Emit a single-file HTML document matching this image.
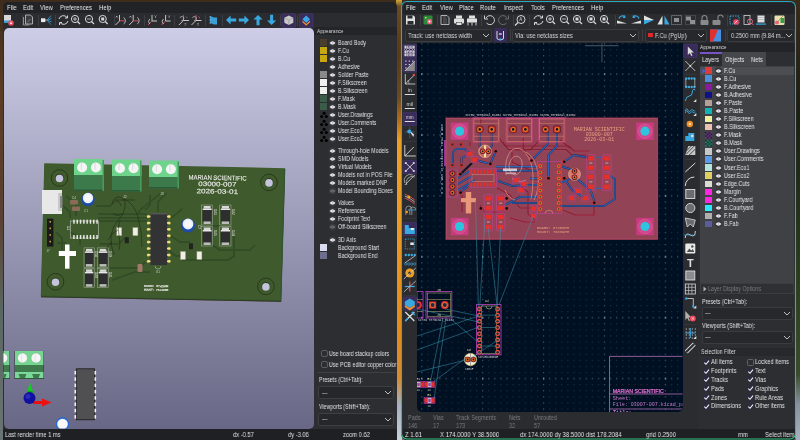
<!DOCTYPE html><html><head><meta charset="utf-8"><style>
*{margin:0;padding:0;box-sizing:border-box}
html,body{width:800px;height:440px;overflow:hidden}
body{position:relative;font-family:"Liberation Sans", sans-serif;background:#5a3a1a}
.ab{position:absolute}
.t{position:absolute;white-space:nowrap;will-change:transform;font-size:6px;line-height:8px;color:#dcdcdc;transform:scaleX(0.79);transform-origin:0 50%}
svg{position:absolute;overflow:visible}
</style></head><body>

<div class="ab" style="left:0px;top:0px;width:800px;height:440px;background:linear-gradient(180deg,#3e2c1c 0%,#5a3c24 20%,#5a4030 50%,#5a6660 70%,#6a7474 100%);"></div>
<div class="ab" style="left:396px;top:0px;width:6px;height:440px;background:linear-gradient(180deg,#d0a838 0%,#6a4a20 1.5%,#5a3a18 12%,#6a4a22 22%,#b06a18 27%,#f0a020 32%,#f09a20 50%,#e88a18 75%,#d88a30 86%,#a8b0c0 92%,#c8d0d8 100%);"></div>
<div class="ab" style="left:2.5px;top:1.5px;width:394px;height:438.5px;background:#2c2e32;border-radius:5px 5px 0 0"></div>
<div class="ab" style="left:2.5px;top:1.5px;width:394px;height:11.5px;background:#222327;border-radius:5px 5px 0 0"></div>
<div class="t" style="left:7px;top:4px;font-size:7.51px;color:#e6e6e6;">File</div>
<div class="t" style="left:23px;top:4px;font-size:7.51px;color:#e6e6e6;">Edit</div>
<div class="t" style="left:40px;top:4px;font-size:7.51px;color:#e6e6e6;">View</div>
<div class="t" style="left:60px;top:4px;font-size:7.51px;color:#e6e6e6;">Preferences</div>
<div class="t" style="left:99px;top:4px;font-size:7.51px;color:#e6e6e6;">Help</div>
<div class="ab" style="left:2.5px;top:13px;width:394px;height:15px;background:#2a2c30;"></div>
<div class="ab" style="left:2.5px;top:428.5px;width:394px;height:11.5px;background:#1f2023;"></div>
<div class="t" style="left:5px;top:430.5px;font-size:7.29px;color:#e0e0e0;">Last render time 1 ms</div>
<div class="t" style="left:233px;top:430.5px;font-size:7.29px;color:#e0e0e0;">dx -0.57</div>
<div class="t" style="left:288px;top:430.5px;font-size:7.29px;color:#e0e0e0;">dy -3.06</div>
<div class="t" style="left:343px;top:430.5px;font-size:7.29px;color:#e0e0e0;">zoom 0.62</div>
<div class="ab" style="left:3.5px;top:28px;width:310px;height:400.5px;background:linear-gradient(180deg,#cdcde7 0%,#686886 100%);border-radius:5px"></div>
<svg width="800" height="440" style="left:0;top:0">
<rect x="4" y="15" width="7" height="8" fill="#d8d8d8"/><rect x="4" y="20.5" width="7" height="2.5" fill="#3aa0d8"/><circle cx="11" cy="23" r="2.8" fill="#e84a5a"/><path d="M11 21.5v2.5M9.8 22.8l1.2 1.2 1.2-1.2" stroke="#fff" stroke-width="0.7" fill="none"/><path d="M23.5 17v8h6" fill="none" stroke="#a8a8a8" stroke-width="0.8"/><path d="M25.5 15h5l2 2v7h-7z" fill="#3a3c40" stroke="#c8c8c8" stroke-width="0.8"/><path d="M27 22.5l3.5-3.5" stroke="#909090" stroke-width="0.8"/><rect x="41" y="18.3" width="4.2" height="3.8" fill="#e8e8e8"/><rect x="45.2" y="19.2" width="1.2" height="2" fill="#b0b0b0"/><path d="M47 20.2l4-4.5M47 20.2l4 4.5M47 20.2l4.5-1.6M47 20.2l4.5 1.6" stroke="#3aa0d8" stroke-width="0.8"/><path d="M59 19a4.5 4.5 0 0 1 8-1.5M68 21a4.5 4.5 0 0 1-8 1.5" stroke="#d8d8d8" stroke-width="1" fill="none"/><path d="M67.5 15.5v2.5h-2.5M59.5 25v-2.5h2.5" stroke="#d8d8d8" stroke-width="1" fill="none"/><circle cx="75" cy="19" r="3.6" stroke="#d8d8d8" stroke-width="1" fill="none"/><path d="M77.5 21.5l2.5 2.5" stroke="#d8d8d8" stroke-width="1.2"/><path d="M73 19h4M75 17v4" stroke="#d8d8d8" stroke-width="0.8"/><circle cx="89" cy="19" r="3.6" stroke="#d8d8d8" stroke-width="1" fill="none"/><path d="M91.5 21.5l2.5 2.5" stroke="#d8d8d8" stroke-width="1.2"/><path d="M87 19h4" stroke="#d8d8d8" stroke-width="0.8"/><circle cx="102.7" cy="19" r="3.6" stroke="#d8d8d8" stroke-width="1" fill="none"/><path d="M105.2 21.5l2.5 2.5" stroke="#d8d8d8" stroke-width="1.2"/><rect x="101.2" y="17.5" width="3" height="3" fill="#d8d8d8"/><path d="M119.5 15v6M115.5 25l4-4" stroke="#d8d8d8" stroke-width="0.9" fill="none"/><path d="M116 16l1.5 1.5M117.5 16l-1.5 1.5" stroke="#d8d8d8" stroke-width="0.6"/><path d="M119.5 20.8h5" stroke="#e84a5a" stroke-width="0.9"/><path d="M123.5 17.5a3 3.5 0 0 1 0 6.5" stroke="#d8d8d8" stroke-width="0.8" fill="none"/><path d="M133.2 15v6M129.2 25l4-4" stroke="#d8d8d8" stroke-width="0.9" fill="none"/><path d="M129.7 16l1.5 1.5M131.2 16l-1.5 1.5" stroke="#d8d8d8" stroke-width="0.6"/><path d="M133.2 20.8h5" stroke="#e84a5a" stroke-width="0.9"/><path d="M137.2 17.5a3 3.5 0 0 1 0 6.5" stroke="#d8d8d8" stroke-width="0.8" fill="none"/><path d="M152 15v6h5" stroke="#d8d8d8" stroke-width="0.9" fill="none"/><path d="M148 25l4-4" stroke="#e84a5a" stroke-width="0.9"/><path d="M154.5 15.5l1 1 1-1M155.5 16.5v1.5" stroke="#d8d8d8" stroke-width="0.5" fill="none"/><path d="M150 19a3 3 0 0 0 0 5" stroke="#d8d8d8" stroke-width="0.8" fill="none"/><path d="M165.6 15v6h5" stroke="#d8d8d8" stroke-width="0.9" fill="none"/><path d="M161.6 25l4-4" stroke="#e84a5a" stroke-width="0.9"/><path d="M168.1 15.5l1 1 1-1M169.1 16.5v1.5" stroke="#d8d8d8" stroke-width="0.5" fill="none"/><path d="M163.6 19a3 3 0 0 0 0 5" stroke="#d8d8d8" stroke-width="0.8" fill="none"/><path d="M183.4 15v5.5" stroke="#e84a5a" stroke-width="0.9"/><path d="M183.4 20.5h5.5M178.9 25l4.5-4.5" stroke="#d8d8d8" stroke-width="0.9" fill="none"/><path d="M179.9 18a2 2 0 1 1 1.5 2.5" stroke="#d8d8d8" stroke-width="0.6" fill="none"/><path d="M184.4 23.5h2M184.4 25h2" stroke="#b8b8b8" stroke-width="0.5"/><path d="M185.9 16.5l1.5 1.5" stroke="#b8b8b8" stroke-width="0.5"/><path d="M196 15v5.5" stroke="#e84a5a" stroke-width="0.9"/><path d="M196 20.5h5.5M191.5 25l4.5-4.5" stroke="#d8d8d8" stroke-width="0.9" fill="none"/><path d="M192.5 18a2 2 0 1 1 1.5 2.5" stroke="#d8d8d8" stroke-width="0.6" fill="none"/><path d="M197 23.5h2M197 25h2" stroke="#b8b8b8" stroke-width="0.5"/><path d="M198.5 16.5l1.5 1.5" stroke="#b8b8b8" stroke-width="0.5"/><path d="M210 16l4 1.5v7l-4-1.5z" fill="#3aa0d8"/><path d="M214 17.5h3v7h-3" fill="#3aa0d8"/><path d="M209 17h2M209 20h2M209 23h2" stroke="#ccc" stroke-width="0.5"/><path d="M226 20l4.6-4.6v3.1h5.6v3h-5.6v3.1z" fill="#3aa8e0"/><path d="M249 20l-4.6-4.6v3.1h-5.6v3h5.6v3.1z" fill="#3aa8e0"/><path d="M258 15l-4.6 4.6h3.1v5.6h3v-5.6h3.1z" fill="#3aa8e0"/><path d="M271.6 25l-4.6-4.6h3.1v-5.6h3v5.6h3.1z" fill="#3aa8e0"/><rect x="282" y="13.8" width="13.5" height="13.5" fill="#3a2c5a" stroke="#4c3c78" stroke-width="0.6" rx="1"/><path d="M288.8 15.5l4.5 2.3v5l-4.5 2.3-4.5-2.3v-5z" fill="#c8c8c8"/><path d="M284.3 17.8l4.5 2.3 4.5-2.3M288.8 20.1v5" stroke="#888" stroke-width="0.5" fill="none"/><rect x="299.5" y="13.8" width="13.5" height="13.5" fill="#3a2c5a" stroke="#4c3c78" stroke-width="0.6" rx="1"/><path d="M306.2 15.5l3.8 3.8-3.8 3.8-3.8-3.8z" fill="#3aa8e8"/><path d="M302.4 20.5l3.8 3.6 3.8-3.6v1.8l-3.8 3.4-3.8-3.4z" fill="#f0902a"/>
</svg>
<div class="ab" style="left:22px;top:15px;width:0.8px;height:11px;background:#3c3e43;"></div>
<div class="ab" style="left:37.5px;top:15px;width:0.8px;height:11px;background:#3c3e43;"></div>
<div class="ab" style="left:55.3px;top:15px;width:0.8px;height:11px;background:#3c3e43;"></div>
<div class="ab" style="left:113.5px;top:15px;width:0.8px;height:11px;background:#3c3e43;"></div>
<div class="ab" style="left:144px;top:15px;width:0.8px;height:11px;background:#3c3e43;"></div>
<div class="ab" style="left:174.4px;top:15px;width:0.8px;height:11px;background:#3c3e43;"></div>
<div class="ab" style="left:205px;top:15px;width:0.8px;height:11px;background:#3c3e43;"></div>
<div class="ab" style="left:222px;top:15px;width:0.8px;height:11px;background:#3c3e43;"></div>
<div class="ab" style="left:280.4px;top:15px;width:0.8px;height:11px;background:#3c3e43;"></div>
<div class="ab" style="left:297px;top:15px;width:0.8px;height:11px;background:#3c3e43;"></div>
<div class="ab" style="left:313.5px;top:27px;width:83px;height:7.5px;background:#232528;"></div>
<div class="t" style="left:317px;top:26.8px;font-size:6.21px;color:#d8d8d8;">Appearance</div>
<div class="ab" style="left:320px;top:39.300000000000004px;width:7px;height:6.6px;background:#4a3e2c;"></div>
<svg width="9" height="8" style="left:328.9px;top:38.6px"><circle cx="3.5" cy="4" r="3.8" fill="#36383c"/><path d="M0.6 4q2.9-3.4 5.8 0q-2.9 3.4-5.8 0z" fill="#ece8ee"/><circle cx="3.5" cy="4" r="0.7" fill="#a8a4b0"/></svg>
<div class="t" style="left:337.8px;top:38.6px;font-size:6.75px;color:#e0e0e0;">Board Body</div>
<div class="ab" style="left:320px;top:47.300000000000004px;width:7px;height:6.6px;background:#c8a810;"></div>
<svg width="9" height="8" style="left:328.9px;top:46.6px"><circle cx="3.5" cy="4" r="3.8" fill="#36383c"/><path d="M0.6 4q2.9-3.4 5.8 0q-2.9 3.4-5.8 0z" fill="#ece8ee"/><circle cx="3.5" cy="4" r="0.7" fill="#a8a4b0"/></svg>
<div class="t" style="left:337.8px;top:46.6px;font-size:6.75px;color:#e0e0e0;">F.Cu</div>
<div class="ab" style="left:320px;top:55.300000000000004px;width:7px;height:6.6px;background:#c8a810;"></div>
<svg width="9" height="8" style="left:328.9px;top:54.6px"><circle cx="3.5" cy="4" r="3.8" fill="#36383c"/><path d="M0.6 4q2.9-3.4 5.8 0q-2.9 3.4-5.8 0z" fill="#ece8ee"/><circle cx="3.5" cy="4" r="0.7" fill="#a8a4b0"/></svg>
<div class="t" style="left:337.8px;top:54.6px;font-size:6.75px;color:#e0e0e0;">B.Cu</div>
<svg width="9" height="8" style="left:328.9px;top:62.599999999999994px"><circle cx="3.5" cy="4" r="3.8" fill="#36383c"/><path d="M0.6 4q2.9-3.4 5.8 0q-2.9 3.4-5.8 0z" fill="#ece8ee"/><circle cx="3.5" cy="4" r="0.7" fill="#a8a4b0"/></svg>
<div class="t" style="left:337.8px;top:62.599999999999994px;font-size:6.75px;color:#e0e0e0;">Adhesive</div>
<div class="ab" style="left:320px;top:71.3px;width:7px;height:6.6px;background:#8a8a8a;"></div>
<svg width="9" height="8" style="left:328.9px;top:70.6px"><circle cx="3.5" cy="4" r="3.8" fill="#36383c"/><path d="M0.6 4q2.9-3.4 5.8 0q-2.9 3.4-5.8 0z" fill="#ece8ee"/><circle cx="3.5" cy="4" r="0.7" fill="#a8a4b0"/></svg>
<div class="t" style="left:337.8px;top:70.6px;font-size:6.75px;color:#e0e0e0;">Solder Paste</div>
<div class="ab" style="left:320px;top:79.3px;width:7px;height:6.6px;background:#f0f0f0;"></div>
<svg width="9" height="8" style="left:328.9px;top:78.6px"><circle cx="3.5" cy="4" r="3.8" fill="#36383c"/><path d="M0.6 4q2.9-3.4 5.8 0q-2.9 3.4-5.8 0z" fill="#ece8ee"/><circle cx="3.5" cy="4" r="0.7" fill="#a8a4b0"/></svg>
<div class="t" style="left:337.8px;top:78.6px;font-size:6.75px;color:#e0e0e0;">F.Silkscreen</div>
<div class="ab" style="left:320px;top:87.3px;width:7px;height:6.6px;background:#f0f0f0;"></div>
<svg width="9" height="8" style="left:328.9px;top:86.6px"><circle cx="3.5" cy="4" r="3.8" fill="#36383c"/><path d="M0.6 4q2.9-3.4 5.8 0q-2.9 3.4-5.8 0z" fill="#ece8ee"/><circle cx="3.5" cy="4" r="0.7" fill="#a8a4b0"/></svg>
<div class="t" style="left:337.8px;top:86.6px;font-size:6.75px;color:#e0e0e0;">B.Silkscreen</div>
<div class="ab" style="left:320px;top:95.3px;width:7px;height:6.6px;background:#3a5c48;"></div>
<svg width="9" height="8" style="left:328.9px;top:94.6px"><circle cx="3.5" cy="4" r="3.8" fill="#36383c"/><path d="M0.6 4q2.9-3.4 5.8 0q-2.9 3.4-5.8 0z" fill="#ece8ee"/><circle cx="3.5" cy="4" r="0.7" fill="#a8a4b0"/></svg>
<div class="t" style="left:337.8px;top:94.6px;font-size:6.75px;color:#e0e0e0;">F.Mask</div>
<div class="ab" style="left:320px;top:103.3px;width:7px;height:6.6px;background:#3a5c48;"></div>
<svg width="9" height="8" style="left:328.9px;top:102.6px"><circle cx="3.5" cy="4" r="3.8" fill="#36383c"/><path d="M0.6 4q2.9-3.4 5.8 0q-2.9 3.4-5.8 0z" fill="#ece8ee"/><circle cx="3.5" cy="4" r="0.7" fill="#a8a4b0"/></svg>
<div class="t" style="left:337.8px;top:102.6px;font-size:6.75px;color:#e0e0e0;">B.Mask</div>
<svg width="8" height="8" style="left:320px;top:110.6px"><circle cx="4.1" cy="2.3" r="1.5" fill="#000"/><circle cx="1.6" cy="5.6" r="1.5" fill="#000"/><circle cx="6.3" cy="5.6" r="1.5" fill="#000"/></svg>
<svg width="9" height="8" style="left:328.9px;top:110.6px"><circle cx="3.5" cy="4" r="3.8" fill="#36383c"/><path d="M0.6 4q2.9-3.4 5.8 0q-2.9 3.4-5.8 0z" fill="#ece8ee"/><circle cx="3.5" cy="4" r="0.7" fill="#a8a4b0"/></svg>
<div class="t" style="left:337.8px;top:110.6px;font-size:6.75px;color:#e0e0e0;">User.Drawings</div>
<svg width="8" height="8" style="left:320px;top:118.6px"><circle cx="4.1" cy="2.3" r="1.5" fill="#000"/><circle cx="1.6" cy="5.6" r="1.5" fill="#000"/><circle cx="6.3" cy="5.6" r="1.5" fill="#000"/></svg>
<svg width="9" height="8" style="left:328.9px;top:118.6px"><circle cx="3.5" cy="4" r="3.8" fill="#36383c"/><path d="M0.6 4q2.9-3.4 5.8 0q-2.9 3.4-5.8 0z" fill="#ece8ee"/><circle cx="3.5" cy="4" r="0.7" fill="#a8a4b0"/></svg>
<div class="t" style="left:337.8px;top:118.6px;font-size:6.75px;color:#e0e0e0;">User.Comments</div>
<svg width="8" height="8" style="left:320px;top:126.6px"><circle cx="4.1" cy="2.3" r="1.5" fill="#000"/><circle cx="1.6" cy="5.6" r="1.5" fill="#000"/><circle cx="6.3" cy="5.6" r="1.5" fill="#000"/></svg>
<svg width="9" height="8" style="left:328.9px;top:126.6px"><circle cx="3.5" cy="4" r="3.8" fill="#36383c"/><path d="M0.6 4q2.9-3.4 5.8 0q-2.9 3.4-5.8 0z" fill="#ece8ee"/><circle cx="3.5" cy="4" r="0.7" fill="#a8a4b0"/></svg>
<div class="t" style="left:337.8px;top:126.6px;font-size:6.75px;color:#e0e0e0;">User.Eco1</div>
<svg width="8" height="8" style="left:320px;top:134.6px"><circle cx="4.1" cy="2.3" r="1.5" fill="#000"/><circle cx="1.6" cy="5.6" r="1.5" fill="#000"/><circle cx="6.3" cy="5.6" r="1.5" fill="#000"/></svg>
<svg width="9" height="8" style="left:328.9px;top:134.6px"><circle cx="3.5" cy="4" r="3.8" fill="#36383c"/><path d="M0.6 4q2.9-3.4 5.8 0q-2.9 3.4-5.8 0z" fill="#ece8ee"/><circle cx="3.5" cy="4" r="0.7" fill="#a8a4b0"/></svg>
<div class="t" style="left:337.8px;top:134.6px;font-size:6.75px;color:#e0e0e0;">User.Eco2</div>
<svg width="9" height="8" style="left:328.9px;top:146.8px"><circle cx="3.5" cy="4" r="3.8" fill="#36383c"/><path d="M0.6 4q2.9-3.4 5.8 0q-2.9 3.4-5.8 0z" fill="#ece8ee"/><circle cx="3.5" cy="4" r="0.7" fill="#a8a4b0"/></svg>
<div class="t" style="left:337.8px;top:146.8px;font-size:6.75px;color:#e0e0e0;">Through-hole Models</div>
<svg width="9" height="8" style="left:328.9px;top:154.8px"><circle cx="3.5" cy="4" r="3.8" fill="#36383c"/><path d="M0.6 4q2.9-3.4 5.8 0q-2.9 3.4-5.8 0z" fill="#ece8ee"/><circle cx="3.5" cy="4" r="0.7" fill="#a8a4b0"/></svg>
<div class="t" style="left:337.8px;top:154.8px;font-size:6.75px;color:#e0e0e0;">SMD Models</div>
<svg width="9" height="8" style="left:328.9px;top:162.8px"><circle cx="3.5" cy="4" r="3.8" fill="#36383c"/><path d="M0.6 4q2.9-3.4 5.8 0q-2.9 3.4-5.8 0z" fill="#ece8ee"/><circle cx="3.5" cy="4" r="0.7" fill="#a8a4b0"/></svg>
<div class="t" style="left:337.8px;top:162.8px;font-size:6.75px;color:#e0e0e0;">Virtual Models</div>
<svg width="9" height="8" style="left:328.9px;top:170.8px"><circle cx="3.5" cy="4" r="3.8" fill="#36383c"/><path d="M0.6 4q2.9-3.4 5.8 0q-2.9 3.4-5.8 0z" fill="#ece8ee"/><circle cx="3.5" cy="4" r="0.7" fill="#a8a4b0"/></svg>
<div class="t" style="left:337.8px;top:170.8px;font-size:6.75px;color:#e0e0e0;">Models not in POS File</div>
<svg width="9" height="8" style="left:328.9px;top:178.8px"><circle cx="3.5" cy="4" r="3.8" fill="#36383c"/><path d="M0.6 4q2.9-3.4 5.8 0q-2.9 3.4-5.8 0z" fill="#ece8ee"/><circle cx="3.5" cy="4" r="0.7" fill="#a8a4b0"/></svg>
<div class="t" style="left:337.8px;top:178.8px;font-size:6.75px;color:#e0e0e0;">Models marked DNP</div>
<svg width="9" height="8" style="left:328.9px;top:187px"><circle cx="3.5" cy="4" r="3.8" fill="#36383c"/><path d="M0.6 4q2.9-3.4 5.8 0q-2.9 3.4-5.8 0z" fill="#6a6a6e"/><circle cx="3.5" cy="4" r="0.7" fill="#505054"/></svg>
<div class="t" style="left:337.8px;top:187px;font-size:6.75px;color:#e0e0e0;">Model Bounding Boxes</div>
<svg width="9" height="8" style="left:328.9px;top:199.2px"><circle cx="3.5" cy="4" r="3.8" fill="#36383c"/><path d="M0.6 4q2.9-3.4 5.8 0q-2.9 3.4-5.8 0z" fill="#ece8ee"/><circle cx="3.5" cy="4" r="0.7" fill="#a8a4b0"/></svg>
<div class="t" style="left:337.8px;top:199.2px;font-size:6.75px;color:#e0e0e0;">Values</div>
<svg width="9" height="8" style="left:328.9px;top:207.2px"><circle cx="3.5" cy="4" r="3.8" fill="#36383c"/><path d="M0.6 4q2.9-3.4 5.8 0q-2.9 3.4-5.8 0z" fill="#ece8ee"/><circle cx="3.5" cy="4" r="0.7" fill="#a8a4b0"/></svg>
<div class="t" style="left:337.8px;top:207.2px;font-size:6.75px;color:#e0e0e0;">References</div>
<svg width="9" height="8" style="left:328.9px;top:215.2px"><circle cx="3.5" cy="4" r="3.8" fill="#36383c"/><path d="M0.6 4q2.9-3.4 5.8 0q-2.9 3.4-5.8 0z" fill="#ece8ee"/><circle cx="3.5" cy="4" r="0.7" fill="#a8a4b0"/></svg>
<div class="t" style="left:337.8px;top:215.2px;font-size:6.75px;color:#e0e0e0;">Footprint Text</div>
<svg width="9" height="8" style="left:328.9px;top:223.2px"><circle cx="3.5" cy="4" r="3.8" fill="#36383c"/><path d="M0.6 4q2.9-3.4 5.8 0q-2.9 3.4-5.8 0z" fill="#6a6a6e"/><circle cx="3.5" cy="4" r="0.7" fill="#505054"/></svg>
<div class="t" style="left:337.8px;top:223.2px;font-size:6.75px;color:#e0e0e0;">Off-board Silkscreen</div>
<svg width="9" height="8" style="left:328.9px;top:235.5px"><circle cx="3.5" cy="4" r="3.8" fill="#36383c"/><path d="M0.6 4q2.9-3.4 5.8 0q-2.9 3.4-5.8 0z" fill="#ece8ee"/><circle cx="3.5" cy="4" r="0.7" fill="#a8a4b0"/></svg>
<div class="t" style="left:337.8px;top:235.5px;font-size:6.75px;color:#e0e0e0;">3D Axis</div>
<div class="ab" style="left:320px;top:244.39999999999998px;width:7px;height:6.6px;background:#dcdcf0;"></div>
<div class="t" style="left:337.8px;top:243.7px;font-size:6.75px;color:#e0e0e0;">Background Start</div>
<div class="ab" style="left:320px;top:252.2px;width:7px;height:6.6px;background:#6e6e8e;"></div>
<div class="t" style="left:337.8px;top:251.5px;font-size:6.75px;color:#e0e0e0;">Background End</div>
<div class="ab" style="left:320.5px;top:350.1px;width:7px;height:7px;background:transparent;border:0.8px solid #5a5c60;border-radius:2px"></div>
<div class="t" style="left:329px;top:349.6px;font-size:6.75px;color:#e0e0e0;">Use board stackup colors</div>
<div class="ab" style="left:320.5px;top:361.3px;width:7px;height:7px;background:transparent;border:0.8px solid #5a5c60;border-radius:2px"></div>
<div class="t" style="left:329px;top:360.8px;font-size:6.75px;color:#e0e0e0;">Use PCB editor copper color</div>
<div class="ab" style="left:318px;top:372.2px;width:78px;height:0.8px;background:#3e4044;"></div>
<div class="t" style="left:318.5px;top:376.3px;font-size:6.64px;color:#e0e0e0;">Presets (Ctrl+Tab):</div>
<div class="ab" style="left:318.4px;top:386.3px;width:75.6px;height:13.1px;background:#25272a;border:0.8px solid #3c3e42;border-radius:2px"></div>
<div class="t" style="left:322px;top:388.8px;font-size:6.53px;color:#c8c8c8;">—</div>
<div class="t" style="left:318.5px;top:402.6px;font-size:6.64px;color:#e0e0e0;">Viewports (Shift+Tab):</div>
<div class="ab" style="left:318.4px;top:412.6px;width:75.6px;height:13.1px;background:#25272a;border:0.8px solid #3c3e42;border-radius:2px"></div>
<div class="t" style="left:322px;top:415.2px;font-size:6.53px;color:#c8c8c8;">—</div>
<svg width="8" height="5" style="left:384px;top:390.3px"><path d="M1 1l3 3 3-3" stroke="#d0d0d0" stroke-width="0.9" fill="none"/></svg>
<svg width="8" height="5" style="left:384px;top:416.7px"><path d="M1 1l3 3 3-3" stroke="#d0d0d0" stroke-width="0.9" fill="none"/></svg>
<svg width="800" height="440" style="left:0;top:0"><defs><clipPath id="cv3"><rect x="3.5" y="28" width="310" height="400.5" rx="5"/></clipPath></defs><g clip-path="url(#cv3)"><polygon points="44.3,163.2 285,168.2 281,301 40.8,296.4" fill="#2a3a1e" transform="translate(0.3,0.8)"/><polygon points="44.3,163.2 285,168.2 281,301 40.8,296.4" fill="#3f5a2c"/><path d="M284.6 168.5L280.7 300.6L41 296.2" stroke="#2a5a34" stroke-width="0.8" fill="none"/><path d="M281 301.3L41 296.8" stroke="#3a2a1a" stroke-width="0.6" fill="none"/><path d="M161 193 L139 211 L139 215" stroke="#2c4422" stroke-width="1.5" fill="none" stroke-linejoin="round"/><path d="M166.4 193 L158 202 L158 212" stroke="#2c4422" stroke-width="1.5" fill="none" stroke-linejoin="round"/><path d="M98 214.3 L147 214.3" stroke="#2c4422" stroke-width="1.5" fill="none" stroke-linejoin="round"/><path d="M98 217.7 L147 217.7" stroke="#2c4422" stroke-width="1.5" fill="none" stroke-linejoin="round"/><path d="M98 221 L147 221" stroke="#2c4422" stroke-width="1.5" fill="none" stroke-linejoin="round"/><path d="M171 218 L178.7 212 L182 208.7" stroke="#2c4422" stroke-width="1.5" fill="none" stroke-linejoin="round"/><path d="M234 231 L234 256.4 L228 260 L182 260" stroke="#2c4422" stroke-width="1.5" fill="none" stroke-linejoin="round"/><path d="M171 236 L180 242 L190 242" stroke="#2c4422" stroke-width="1.5" fill="none" stroke-linejoin="round"/><path d="M168 250 L176 256 L182 256" stroke="#2c4422" stroke-width="1.5" fill="none" stroke-linejoin="round"/><path d="M62 205 L70 212 L70 218" stroke="#2c4422" stroke-width="1.5" fill="none" stroke-linejoin="round"/><path d="M66 196 L76 204 L76 216" stroke="#2c4422" stroke-width="1.5" fill="none" stroke-linejoin="round"/><path d="M96 206 L110 206 L116 200 L135 200" stroke="#2c4422" stroke-width="1.5" fill="none" stroke-linejoin="round"/><path d="M56 232 L62 238 L62 250" stroke="#2c4422" stroke-width="1.5" fill="none" stroke-linejoin="round"/><path d="M57 243 L66 243" stroke="#2c4422" stroke-width="1.5" fill="none" stroke-linejoin="round"/><path d="M100 244 L118 244 L125 238" stroke="#2c4422" stroke-width="1.5" fill="none" stroke-linejoin="round"/><path d="M110 268 L140 268 L145 262" stroke="#2c4422" stroke-width="1.5" fill="none" stroke-linejoin="round"/><path d="M112 280 L135 272 L150 272" stroke="#2c4422" stroke-width="1.5" fill="none" stroke-linejoin="round"/><path d="M211 226 L221 226" stroke="#2c4422" stroke-width="1.5" fill="none" stroke-linejoin="round"/><path d="M212 245 L220 250 L250 250 L255 245" stroke="#2c4422" stroke-width="1.5" fill="none" stroke-linejoin="round"/><path d="M150 195 L150 205 L145 210" stroke="#2c4422" stroke-width="1.5" fill="none" stroke-linejoin="round"/><path d="M80 245 L80 238 L70 232" stroke="#2c4422" stroke-width="1.5" fill="none" stroke-linejoin="round"/><path d="M161 193 L139 211 L139 215" stroke="#3d5a2e" stroke-width="0.55" fill="none" stroke-linejoin="round"/><path d="M166.4 193 L158 202 L158 212" stroke="#3d5a2e" stroke-width="0.55" fill="none" stroke-linejoin="round"/><path d="M98 214.3 L147 214.3" stroke="#3d5a2e" stroke-width="0.55" fill="none" stroke-linejoin="round"/><path d="M98 217.7 L147 217.7" stroke="#3d5a2e" stroke-width="0.55" fill="none" stroke-linejoin="round"/><path d="M98 221 L147 221" stroke="#3d5a2e" stroke-width="0.55" fill="none" stroke-linejoin="round"/><path d="M171 218 L178.7 212 L182 208.7" stroke="#3d5a2e" stroke-width="0.55" fill="none" stroke-linejoin="round"/><path d="M234 231 L234 256.4 L228 260 L182 260" stroke="#3d5a2e" stroke-width="0.55" fill="none" stroke-linejoin="round"/><path d="M171 236 L180 242 L190 242" stroke="#3d5a2e" stroke-width="0.55" fill="none" stroke-linejoin="round"/><path d="M168 250 L176 256 L182 256" stroke="#3d5a2e" stroke-width="0.55" fill="none" stroke-linejoin="round"/><path d="M62 205 L70 212 L70 218" stroke="#3d5a2e" stroke-width="0.55" fill="none" stroke-linejoin="round"/><path d="M66 196 L76 204 L76 216" stroke="#3d5a2e" stroke-width="0.55" fill="none" stroke-linejoin="round"/><path d="M96 206 L110 206 L116 200 L135 200" stroke="#3d5a2e" stroke-width="0.55" fill="none" stroke-linejoin="round"/><path d="M56 232 L62 238 L62 250" stroke="#3d5a2e" stroke-width="0.55" fill="none" stroke-linejoin="round"/><path d="M57 243 L66 243" stroke="#3d5a2e" stroke-width="0.55" fill="none" stroke-linejoin="round"/><path d="M100 244 L118 244 L125 238" stroke="#3d5a2e" stroke-width="0.55" fill="none" stroke-linejoin="round"/><path d="M110 268 L140 268 L145 262" stroke="#3d5a2e" stroke-width="0.55" fill="none" stroke-linejoin="round"/><path d="M112 280 L135 272 L150 272" stroke="#3d5a2e" stroke-width="0.55" fill="none" stroke-linejoin="round"/><path d="M211 226 L221 226" stroke="#3d5a2e" stroke-width="0.55" fill="none" stroke-linejoin="round"/><path d="M212 245 L220 250 L250 250 L255 245" stroke="#3d5a2e" stroke-width="0.55" fill="none" stroke-linejoin="round"/><path d="M150 195 L150 205 L145 210" stroke="#3d5a2e" stroke-width="0.55" fill="none" stroke-linejoin="round"/><path d="M80 245 L80 238 L70 232" stroke="#3d5a2e" stroke-width="0.55" fill="none" stroke-linejoin="round"/><circle cx="59.5" cy="178" r="8.3" fill="none" stroke="#1e2a16" stroke-width="0.7"/><circle cx="59.5" cy="178" r="4.3" fill="#2e3a22"/><circle cx="59.5" cy="178.5" r="3.8" fill="#c4c4dc"/><circle cx="269" cy="182.4" r="8.3" fill="none" stroke="#1e2a16" stroke-width="0.7"/><circle cx="269" cy="182.4" r="4.3" fill="#2e3a22"/><circle cx="269" cy="182.9" r="3.8" fill="#c4c4dc"/><circle cx="55.5" cy="281.7" r="8.3" fill="none" stroke="#1e2a16" stroke-width="0.7"/><circle cx="55.5" cy="281.7" r="4.3" fill="#2e3a22"/><circle cx="55.5" cy="282.2" r="3.8" fill="#c4c4dc"/><circle cx="265.9" cy="286.4" r="8.3" fill="none" stroke="#1e2a16" stroke-width="0.7"/><circle cx="265.9" cy="286.4" r="4.3" fill="#2e3a22"/><circle cx="265.9" cy="286.9" r="3.8" fill="#c4c4dc"/><rect x="74" y="175" width="30" height="16" fill="#3c7a4c"/><rect x="74" y="189.5" width="30" height="1.5" fill="#2a5a38"/><rect x="74" y="159" width="30" height="16" fill="#6ed48c"/><rect x="102.5" y="160" width="1.5" height="31" fill="#4a9a60"/><circle cx="82.1" cy="167.5" r="5" fill="#f4f4f4"/><path d="M81.3 161.5v8" stroke="#c8c8c8" stroke-width="0.6"/><circle cx="95.9" cy="167.5" r="5" fill="#f4f4f4"/><path d="M95.10000000000001 161.5v8" stroke="#c8c8c8" stroke-width="0.6"/><rect x="112" y="176" width="29.5" height="15.5" fill="#3c7a4c"/><rect x="112" y="190.0" width="29.5" height="1.5" fill="#2a5a38"/><rect x="112" y="159.5" width="29.5" height="16.5" fill="#6ed48c"/><rect x="140.0" y="160.5" width="1.5" height="31.0" fill="#4a9a60"/><circle cx="119.965" cy="168.25" r="5" fill="#f4f4f4"/><path d="M119.165 162.0v8" stroke="#c8c8c8" stroke-width="0.6"/><circle cx="133.535" cy="168.25" r="5" fill="#f4f4f4"/><path d="M132.73499999999999 162.0v8" stroke="#c8c8c8" stroke-width="0.6"/><rect x="149" y="177" width="30" height="11.5" fill="#3c7a4c"/><rect x="149" y="187.0" width="30" height="1.5" fill="#2a5a38"/><rect x="149" y="160.5" width="30" height="16.5" fill="#6ed48c"/><rect x="177.5" y="161.5" width="1.5" height="27.0" fill="#4a9a60"/><circle cx="157.1" cy="169.25" r="5" fill="#f4f4f4"/><path d="M156.29999999999998 163.0v8" stroke="#c8c8c8" stroke-width="0.6"/><circle cx="170.9" cy="169.25" r="5" fill="#f4f4f4"/><path d="M170.1 163.0v8" stroke="#c8c8c8" stroke-width="0.6"/><text x="123" y="197.5" font-size="3.5" fill="#d0d0d0" font-family="Liberation Sans">J2</text><text x="160" y="195" font-size="3.5" fill="#d0d0d0" font-family="Liberation Sans">J3</text><rect x="42" y="190" width="20" height="24" fill="#e8e8e8"/><rect x="58" y="193" width="4" height="18" fill="#c8c8c8"/><rect x="60" y="196" width="2.5" height="12" fill="#888"/><rect x="70" y="200" width="8" height="4.5" fill="#8a6a58" rx="1"/><rect x="72" y="206.5" width="8" height="4.5" fill="#8a6a58" rx="1"/><text x="72" y="199" font-size="3" fill="#d0d0d0" font-family="Liberation Sans">C4</text><text x="84" y="212" font-size="3" fill="#d0d0d0" font-family="Liberation Sans">C1</text><circle cx="88" cy="199.5" r="6.8" fill="#1e4aa8"/><circle cx="88" cy="198" r="5.2" fill="#e8f0f8"/><circle cx="88" cy="198" r="3.6" fill="#f8f8f8"/><rect x="47" y="218.6" width="6.4" height="28" fill="#1a1a1a"/><rect x="49.4" y="221.0" width="1.6" height="1.6" fill="#c8a040"/><rect x="49.4" y="227.6" width="1.6" height="1.6" fill="#c8a040"/><rect x="49.4" y="234.2" width="1.6" height="1.6" fill="#c8a040"/><rect x="49.4" y="240.8" width="1.6" height="1.6" fill="#c8a040"/><text x="46.5" y="252" font-size="3" fill="#d0d0d0" font-family="Liberation Sans">J7</text><rect x="70.6" y="221" width="28" height="17" fill="none" stroke="#d8d8d8" stroke-width="0.5"/><rect x="73.2" y="219.7" width="1.5" height="4" fill="#e8e8e8"/><rect x="73.2" y="235" width="1.5" height="4" fill="#e8e8e8"/><rect x="76.5" y="219.7" width="1.5" height="4" fill="#e8e8e8"/><rect x="76.5" y="235" width="1.5" height="4" fill="#e8e8e8"/><rect x="79.8" y="219.7" width="1.5" height="4" fill="#e8e8e8"/><rect x="79.8" y="235" width="1.5" height="4" fill="#e8e8e8"/><rect x="83.1" y="219.7" width="1.5" height="4" fill="#e8e8e8"/><rect x="83.1" y="235" width="1.5" height="4" fill="#e8e8e8"/><rect x="86.4" y="219.7" width="1.5" height="4" fill="#e8e8e8"/><rect x="86.4" y="235" width="1.5" height="4" fill="#e8e8e8"/><rect x="89.7" y="219.7" width="1.5" height="4" fill="#e8e8e8"/><rect x="89.7" y="235" width="1.5" height="4" fill="#e8e8e8"/><rect x="93.0" y="219.7" width="1.5" height="4" fill="#e8e8e8"/><rect x="93.0" y="235" width="1.5" height="4" fill="#e8e8e8"/><rect x="96.3" y="219.7" width="1.5" height="4" fill="#e8e8e8"/><rect x="96.3" y="235" width="1.5" height="4" fill="#e8e8e8"/><rect x="65" y="244.5" width="4.5" height="24.2" fill="#ffffff"/><rect x="58.8" y="251" width="17.2" height="5" fill="#ffffff"/><rect x="84" y="247.9" width="10.299999999999997" height="19.700000000000017" fill="none" stroke="#c8c8c8" stroke-width="0.4"/><rect x="85" y="251.4" width="8.299999999999997" height="12.700000000000017" fill="#2e2e30"/><rect x="86" y="248.9" width="6.299999999999997" height="2.5" fill="#d8d8d8"/><rect x="86" y="264.1" width="6.299999999999997" height="2.5" fill="#bcbcbc"/><rect x="85" y="251.4" width="8.299999999999997" height="1.5" fill="#e8e8e8"/><rect x="84" y="268.4" width="10.299999999999997" height="19.30000000000001" fill="none" stroke="#c8c8c8" stroke-width="0.4"/><rect x="85" y="271.9" width="8.299999999999997" height="12.300000000000011" fill="#2e2e30"/><rect x="86" y="269.4" width="6.299999999999997" height="2.5" fill="#d8d8d8"/><rect x="86" y="284.2" width="6.299999999999997" height="2.5" fill="#bcbcbc"/><rect x="85" y="271.9" width="8.299999999999997" height="1.5" fill="#e8e8e8"/><rect x="97.7" y="247.9" width="10.700000000000003" height="19.700000000000017" fill="none" stroke="#c8c8c8" stroke-width="0.4"/><rect x="98.7" y="251.4" width="8.700000000000003" height="12.700000000000017" fill="#2e2e30"/><rect x="99.7" y="248.9" width="6.700000000000003" height="2.5" fill="#d8d8d8"/><rect x="99.7" y="264.1" width="6.700000000000003" height="2.5" fill="#bcbcbc"/><rect x="98.7" y="251.4" width="8.700000000000003" height="1.5" fill="#e8e8e8"/><rect x="97.7" y="268.4" width="10.700000000000003" height="19.30000000000001" fill="none" stroke="#c8c8c8" stroke-width="0.4"/><rect x="98.7" y="271.9" width="8.700000000000003" height="12.300000000000011" fill="#2e2e30"/><rect x="99.7" y="269.4" width="6.700000000000003" height="2.5" fill="#d8d8d8"/><rect x="99.7" y="284.2" width="6.700000000000003" height="2.5" fill="#bcbcbc"/><rect x="98.7" y="271.9" width="8.700000000000003" height="1.5" fill="#e8e8e8"/><rect x="201.7" y="205" width="10.900000000000006" height="20" fill="none" stroke="#c8c8c8" stroke-width="0.4"/><rect x="202.7" y="208.5" width="8.900000000000006" height="13" fill="#2e2e30"/><rect x="203.7" y="206" width="6.900000000000006" height="2.5" fill="#d8d8d8"/><rect x="203.7" y="221.5" width="6.900000000000006" height="2.5" fill="#bcbcbc"/><rect x="202.7" y="208.5" width="8.900000000000006" height="1.5" fill="#e8e8e8"/><rect x="201.7" y="226.5" width="10.900000000000006" height="19.5" fill="none" stroke="#c8c8c8" stroke-width="0.4"/><rect x="202.7" y="230.0" width="8.900000000000006" height="12.5" fill="#2e2e30"/><rect x="203.7" y="227.5" width="6.900000000000006" height="2.5" fill="#d8d8d8"/><rect x="203.7" y="242.5" width="6.900000000000006" height="2.5" fill="#bcbcbc"/><rect x="202.7" y="230.0" width="8.900000000000006" height="1.5" fill="#e8e8e8"/><rect x="219.8" y="205" width="11.199999999999989" height="20" fill="none" stroke="#c8c8c8" stroke-width="0.4"/><rect x="220.8" y="208.5" width="9.199999999999989" height="13" fill="#2e2e30"/><rect x="221.8" y="206" width="7.199999999999989" height="2.5" fill="#d8d8d8"/><rect x="221.8" y="221.5" width="7.199999999999989" height="2.5" fill="#bcbcbc"/><rect x="220.8" y="208.5" width="9.199999999999989" height="1.5" fill="#e8e8e8"/><rect x="219.8" y="226.5" width="11.199999999999989" height="19.5" fill="none" stroke="#c8c8c8" stroke-width="0.4"/><rect x="220.8" y="230.0" width="9.199999999999989" height="12.5" fill="#2e2e30"/><rect x="221.8" y="227.5" width="7.199999999999989" height="2.5" fill="#d8d8d8"/><rect x="221.8" y="242.5" width="7.199999999999989" height="2.5" fill="#bcbcbc"/><rect x="220.8" y="230.0" width="9.199999999999989" height="1.5" fill="#e8e8e8"/><rect x="150.5" y="213" width="16.5" height="52" fill="#333335"/><rect x="150.5" y="213" width="16.5" height="1.5" fill="#555"/><circle cx="148.3" cy="216.5" r="1.5" fill="#e8c848"/><circle cx="169.2" cy="216.5" r="1.5" fill="#e8c848"/><rect x="147.5" y="215.7" width="3" height="1.6" fill="#f0e0a0"/><rect x="167" y="215.7" width="3" height="1.6" fill="#f0e0a0"/><circle cx="148.3" cy="222.9" r="1.5" fill="#e8c848"/><circle cx="169.2" cy="222.9" r="1.5" fill="#e8c848"/><rect x="147.5" y="222.1" width="3" height="1.6" fill="#f0e0a0"/><rect x="167" y="222.1" width="3" height="1.6" fill="#f0e0a0"/><circle cx="148.3" cy="229.3" r="1.5" fill="#e8c848"/><circle cx="169.2" cy="229.3" r="1.5" fill="#e8c848"/><rect x="147.5" y="228.5" width="3" height="1.6" fill="#f0e0a0"/><rect x="167" y="228.5" width="3" height="1.6" fill="#f0e0a0"/><circle cx="148.3" cy="235.7" r="1.5" fill="#e8c848"/><circle cx="169.2" cy="235.7" r="1.5" fill="#e8c848"/><rect x="147.5" y="234.89999999999998" width="3" height="1.6" fill="#f0e0a0"/><rect x="167" y="234.89999999999998" width="3" height="1.6" fill="#f0e0a0"/><circle cx="148.3" cy="242.1" r="1.5" fill="#e8c848"/><circle cx="169.2" cy="242.1" r="1.5" fill="#e8c848"/><rect x="147.5" y="241.29999999999998" width="3" height="1.6" fill="#f0e0a0"/><rect x="167" y="241.29999999999998" width="3" height="1.6" fill="#f0e0a0"/><circle cx="148.3" cy="248.5" r="1.5" fill="#e8c848"/><circle cx="169.2" cy="248.5" r="1.5" fill="#e8c848"/><rect x="147.5" y="247.7" width="3" height="1.6" fill="#f0e0a0"/><rect x="167" y="247.7" width="3" height="1.6" fill="#f0e0a0"/><circle cx="148.3" cy="254.9" r="1.5" fill="#e8c848"/><circle cx="169.2" cy="254.9" r="1.5" fill="#e8c848"/><rect x="147.5" y="254.1" width="3" height="1.6" fill="#f0e0a0"/><rect x="167" y="254.1" width="3" height="1.6" fill="#f0e0a0"/><circle cx="148.3" cy="261.3" r="1.5" fill="#e8c848"/><circle cx="169.2" cy="261.3" r="1.5" fill="#e8c848"/><rect x="147.5" y="260.5" width="3" height="1.6" fill="#f0e0a0"/><rect x="167" y="260.5" width="3" height="1.6" fill="#f0e0a0"/><path d="M155 266 a3 3 0 0 0 6 0" stroke="#d0d0d0" stroke-width="0.5" fill="none"/><text x="156" y="273" font-size="3" fill="#d0d0d0" font-family="Liberation Sans">U1</text><circle cx="188" cy="225.5" r="7" fill="#1e4aa8"/><circle cx="188" cy="224" r="5.4" fill="#e8f0f8"/><circle cx="188" cy="224" r="3.6" fill="#f8f8f8"/><rect x="116.7" y="227.6" width="5" height="8" fill="#f0f0e8" stroke="#a0a080" stroke-width="0.4"/><rect x="132.9" y="227.6" width="5" height="8" fill="#f0f0e8" stroke="#a0a080" stroke-width="0.4"/><rect x="180.5" y="251.5" width="5" height="8" fill="#f0f0e8" stroke="#a0a080" stroke-width="0.4"/><rect x="196.9" y="251.5" width="5" height="8" fill="#f0f0e8" stroke="#a0a080" stroke-width="0.4"/><rect x="124.8" y="237.2" width="4" height="6" fill="#222"/><rect x="189" y="243.3" width="4" height="6" fill="#222"/><rect x="137.5" y="264" width="5" height="8" fill="#a07a68" rx="1"/><path d="M112 204 q2 -8 8 -7 q6 2 5 10 q-1 8 -6 12 q-6 6 -8 16 q-1 10 3 20 M116 201 q4 0 5 5 M113 214 q5 3 9 0 M120 220 q-3 8 -1 16 q2 8 0 14 M124 199 q10 4 14 18 q4 14 4 30 M108 240 q4 -8 10 -10 M106 250 q2 -6 6 -8" stroke="#1a1a14" stroke-width="0.45" fill="none"/><text x="217.5" y="180" font-size="6.6" fill="#f4f4f4" stroke="#f4f4f4" stroke-width="0.1" font-family="Liberation Sans" text-anchor="middle" lengthAdjust="spacingAndGlyphs" textLength="58" transform="rotate(1.2 217 180)">MARIAN SCIENTIFIC</text><text x="217.5" y="186.3" font-size="6.6" fill="#f4f4f4" stroke="#f4f4f4" stroke-width="0.1" font-family="Liberation Sans" text-anchor="middle" lengthAdjust="spacingAndGlyphs" textLength="38" transform="rotate(1.2 217 180)">03000-007</text><text x="217.5" y="193.6" font-size="6.6" fill="#f4f4f4" stroke="#f4f4f4" stroke-width="0.1" font-family="Liberation Sans" text-anchor="middle" lengthAdjust="spacingAndGlyphs" textLength="41.5" transform="rotate(1.2 217 180)">2026-03-01</text><g transform="rotate(1 150 288)"><text x="144" y="287" font-size="2.9" fill="#f0f0f0" stroke="#f0f0f0" stroke-width="0.12" font-family="Liberation Mono">BOARD: 87x50MM</text><text x="144" y="290.8" font-size="2.9" fill="#f0f0f0" stroke="#f0f0f0" stroke-width="0.12" font-family="Liberation Mono">MOUNT: 76x39MM</text></g><text x="0" y="0" font-size="3.2" fill="#e0e0e0" font-family="Liberation Sans" transform="translate(213.5 209) rotate(90)">D23</text><text x="0" y="0" font-size="3.2" fill="#e0e0e0" font-family="Liberation Sans" transform="translate(231.5 209) rotate(90)">D22</text><text x="0" y="0" font-size="3.2" fill="#e0e0e0" font-family="Liberation Sans" transform="translate(213.5 230) rotate(90)">D25</text><text x="0" y="0" font-size="3.2" fill="#e0e0e0" font-family="Liberation Sans" transform="translate(231.5 230) rotate(90)">D24</text><text x="0" y="0" font-size="3.2" fill="#e0e0e0" font-family="Liberation Sans" transform="translate(95 251) rotate(90)">D18</text><text x="0" y="0" font-size="3.2" fill="#e0e0e0" font-family="Liberation Sans" transform="translate(109 251) rotate(90)">D19</text><text x="0" y="0" font-size="3.2" fill="#e0e0e0" font-family="Liberation Sans" transform="translate(95 272) rotate(90)">D20</text><text x="0" y="0" font-size="3.2" fill="#e0e0e0" font-family="Liberation Sans" transform="translate(109 272) rotate(90)">D21</text><text x="0" y="0" font-size="3.2" fill="#e0e0e0" font-family="Liberation Sans" transform="translate(198 225) rotate(90)">C7</text><text x="0" y="0" font-size="3.2" fill="#e0e0e0" font-family="Liberation Sans" transform="translate(66.5 226) rotate(90)">U3</text><rect x="-17" y="351" width="27" height="28" fill="#1e3a24"/><rect x="-16.5" y="351" width="26" height="14" fill="#74d690"/><rect x="-16.5" y="365" width="26" height="7" fill="#3e7a4c"/><rect x="-16.5" y="372" width="26" height="6.2" fill="#7ad89a"/><circle cx="-9.709999999999999" cy="358" r="5" fill="#f6f6f6" stroke="#58a870" stroke-width="0.4"/><path d="M-10.709999999999999 353.5v9" stroke="#d0d0d0" stroke-width="0.5"/><path d="M-13.709999999999999 374h8l-1.5 4h-5z" fill="#3e7a4c"/><circle cx="2.710000000000001" cy="358" r="5" fill="#f6f6f6" stroke="#58a870" stroke-width="0.4"/><path d="M1.7100000000000009 353.5v9" stroke="#d0d0d0" stroke-width="0.5"/><path d="M-1.2899999999999991 374h8l-1.5 4h-5z" fill="#3e7a4c"/><rect x="14.5" y="351" width="29.5" height="28" fill="#1e3a24"/><rect x="15.0" y="351" width="28.5" height="14" fill="#74d690"/><rect x="15.0" y="365" width="28.5" height="7" fill="#3e7a4c"/><rect x="15.0" y="372" width="28.5" height="6.2" fill="#7ad89a"/><circle cx="22.465" cy="358" r="5" fill="#f6f6f6" stroke="#58a870" stroke-width="0.4"/><path d="M21.465 353.5v9" stroke="#d0d0d0" stroke-width="0.5"/><path d="M18.465 374h8l-1.5 4h-5z" fill="#3e7a4c"/><circle cx="36.035" cy="358" r="5" fill="#f6f6f6" stroke="#58a870" stroke-width="0.4"/><path d="M35.035 353.5v9" stroke="#d0d0d0" stroke-width="0.5"/><path d="M32.035 374h8l-1.5 4h-5z" fill="#3e7a4c"/><rect x="76.3" y="368.8" width="18.2" height="51" fill="#505052" stroke="#1a1a1a" stroke-width="0.8"/><rect x="74.5" y="371.0" width="1.6" height="3.5" fill="#f4f4f4"/><rect x="94.5" y="371.0" width="1.6" height="3.5" fill="#f4f4f4"/><rect x="74.5" y="377.3" width="1.6" height="3.5" fill="#f4f4f4"/><rect x="94.5" y="377.3" width="1.6" height="3.5" fill="#f4f4f4"/><rect x="74.5" y="383.6" width="1.6" height="3.5" fill="#f4f4f4"/><rect x="94.5" y="383.6" width="1.6" height="3.5" fill="#f4f4f4"/><rect x="74.5" y="389.9" width="1.6" height="3.5" fill="#f4f4f4"/><rect x="94.5" y="389.9" width="1.6" height="3.5" fill="#f4f4f4"/><rect x="74.5" y="396.2" width="1.6" height="3.5" fill="#f4f4f4"/><rect x="94.5" y="396.2" width="1.6" height="3.5" fill="#f4f4f4"/><rect x="74.5" y="402.5" width="1.6" height="3.5" fill="#f4f4f4"/><rect x="94.5" y="402.5" width="1.6" height="3.5" fill="#f4f4f4"/><rect x="74.5" y="408.8" width="1.6" height="3.5" fill="#f4f4f4"/><rect x="94.5" y="408.8" width="1.6" height="3.5" fill="#f4f4f4"/><rect x="74.5" y="415.1" width="1.6" height="3.5" fill="#f4f4f4"/><rect x="94.5" y="415.1" width="1.6" height="3.5" fill="#f4f4f4"/><circle cx="62.5" cy="424" r="6.8" fill="#2a6ad8"/><circle cx="62.5" cy="424" r="5.3" fill="#f8f8f8"/><path d="M33 402.5h10" stroke="#e81010" stroke-width="2.8"/><path d="M42 398.5l9.5 4-9.5 4z" fill="#f01010"/><path d="M30 382.5l-3.2 9.5h6.4z" fill="#18c828"/><ellipse cx="30" cy="392" rx="3.2" ry="1.3" fill="#10a020"/><rect x="29" y="392" width="2" height="2" fill="#10a020"/><circle cx="29.5" cy="398" r="6" fill="#1010a0"/><circle cx="28" cy="396.5" r="2.5" fill="#2a2ac0"/></g></svg>
<div class="ab" style="left:401.0px;top:1px;width:395.0px;height:438.5px;background:#2a2c30;border-radius:6px"></div>
<div class="ab" style="left:402.5px;top:2.5px;width:393.0px;height:11px;background:#222327;border-radius:4px 4px 0 0"></div>
<div class="t" style="left:406px;top:4px;font-size:7.51px;color:#e6e6e6;">File</div>
<div class="t" style="left:422px;top:4px;font-size:7.51px;color:#e6e6e6;">Edit</div>
<div class="t" style="left:440px;top:4px;font-size:7.51px;color:#e6e6e6;">View</div>
<div class="t" style="left:459px;top:4px;font-size:7.51px;color:#e6e6e6;">Place</div>
<div class="t" style="left:480px;top:4px;font-size:7.51px;color:#e6e6e6;">Route</div>
<div class="t" style="left:503.5px;top:4px;font-size:7.51px;color:#e6e6e6;">Inspect</div>
<div class="t" style="left:531px;top:4px;font-size:7.51px;color:#e6e6e6;">Tools</div>
<div class="t" style="left:552px;top:4px;font-size:7.51px;color:#e6e6e6;">Preferences</div>
<div class="t" style="left:591px;top:4px;font-size:7.51px;color:#e6e6e6;">Help</div>
<div class="ab" style="left:402.5px;top:13.5px;width:393.0px;height:14px;background:#2a2c30;"></div>
<svg width="800" height="440" style="left:0;top:0"><path d="M406 15.5h7.5l1.5 1.5v7.5h-9z" fill="#e0e0e0"/><rect x="407.5" y="15.5" width="5" height="3" fill="#2a2c30"/><rect x="407.5" y="21" width="6" height="3.5" fill="#2a2c30"/><rect x="423.5" y="15.5" width="9" height="9" fill="#2a8a3a" rx="1"/><circle cx="429.5" cy="21.5" r="2.6" fill="#f06080"/><circle cx="429.5" cy="21.5" r="1" fill="#fff"/><rect x="425" y="17" width="1.5" height="1.5" fill="#e8d040"/><path d="M441 15.5h6l2 2v7h-8z" fill="none" stroke="#c0c0c0" stroke-width="0.9"/><path d="M443 17h3M443 19h4M443 21h4M443 23h4" stroke="#888" stroke-width="0.6"/><rect x="454" y="18.5" width="10" height="5" rx="1" fill="#e0e0e0"/><rect x="456" y="15.5" width="6" height="3" fill="#e0e0e0"/><rect x="456" y="22" width="6" height="2.5" fill="#2a2c30"/><rect x="456.5" y="22.5" width="5" height="2.5" fill="#e0e0e0"/><rect x="467" y="18.5" width="10" height="4" fill="#e0e0e0"/><rect x="469" y="15.5" width="6" height="3" fill="#e0e0e0"/><path d="M468 22.5v3M476 22.5v3M472 22.5v3" stroke="#e0e0e0" stroke-width="0.9"/><path d="M486 18a4.5 4.5 0 1 1 0.5 5" stroke="#d0d0d0" stroke-width="1" fill="none"/><path d="M484.5 15.5v3.5h3.5" stroke="#d0d0d0" stroke-width="1" fill="none"/><path d="M507 18a4.5 4.5 0 1 0 -0.5 5" stroke="#6a6c70" stroke-width="1" fill="none"/><path d="M508.5 15.5v3.5h-3.5" stroke="#6a6c70" stroke-width="1" fill="none"/><circle cx="521" cy="19.5" r="4" stroke="#d8d8d8" stroke-width="1" fill="none"/><path d="M518 22.5l-3 3" stroke="#d8d8d8" stroke-width="1.3"/><text x="519.2" y="21.3" font-size="4.5" fill="#d8d8d8" font-family="Liberation Sans">A</text><path d="M534 19a4.5 4.5 0 0 1 8-1.5M543 21a4.5 4.5 0 0 1-8 1.5" stroke="#d8d8d8" stroke-width="1" fill="none"/><path d="M542.5 15.5v2.5h-2.5M534.5 25v-2.5h2.5" stroke="#d8d8d8" stroke-width="1" fill="none"/><circle cx="550" cy="19" r="3.6" stroke="#d8d8d8" stroke-width="1" fill="none"/><path d="M552.5 21.5l2.5 2.5" stroke="#d8d8d8" stroke-width="1.2"/><path d="M548 19h4M550 17v4" stroke="#d8d8d8" stroke-width="0.8"/><circle cx="564" cy="19" r="3.6" stroke="#d8d8d8" stroke-width="1" fill="none"/><path d="M566.5 21.5l2.5 2.5" stroke="#d8d8d8" stroke-width="1.2"/><path d="M562 19h4" stroke="#d8d8d8" stroke-width="0.8"/><circle cx="577" cy="19" r="3.6" stroke="#d8d8d8" stroke-width="1" fill="none"/><path d="M579.5 21.5l2.5 2.5" stroke="#d8d8d8" stroke-width="1.2"/><rect x="575.5" y="17.5" width="3" height="3" fill="#d8d8d8"/><circle cx="591" cy="19" r="3.6" stroke="#d8d8d8" stroke-width="1" fill="none"/><path d="M593.5 21.5l2.5 2.5" stroke="#d8d8d8" stroke-width="1.2"/><rect x="589.5" y="17.5" width="3" height="3" fill="#d8d8d8"/><circle cx="604" cy="19" r="3.6" stroke="#d8d8d8" stroke-width="1" fill="none"/><path d="M606.5 21.5l2.5 2.5" stroke="#d8d8d8" stroke-width="1.2"/><rect x="602.5" y="17.5" width="3" height="3" fill="#d8d8d8"/><path d="M617 23.5h10l-10-3z" fill="#e0e0e0"/><path d="M619 18.5a4 4 0 0 1 6 -2" stroke="#3aa8e0" stroke-width="1.2" fill="none"/><path d="M625 15l0.5 3h-3z" fill="#3aa8e0"/><path d="M631 23.5h10v-3z" fill="#e0e0e0"/><path d="M639 18.5a4 4 0 0 0 -6 -2" stroke="#3aa8e0" stroke-width="1.2" fill="none"/><path d="M633 15l-0.5 3h3z" fill="#3aa8e0"/><path d="M644 15.5l10 4.5h-10z" fill="#e0e0e0"/><path d="M644 24.5l10-4.5h-10z" fill="#3aa8e0"/><path d="M662.5 15.5l-5 9h5z" fill="#e0e0e0"/><path d="M664.5 15.5l5 9h-5z" fill="#3aa8e0"/><rect x="671.5" y="15.5" width="10" height="9" fill="none" stroke="#a0a0a0" stroke-width="0.8" stroke-dasharray="1.2 0.8"/><rect x="674" y="18" width="5" height="4" fill="#909090"/><rect x="686" y="16.5" width="5" height="4" fill="#909090"/><rect x="690" y="20" width="5" height="4" fill="#909090"/><rect x="685.5" y="15.5" width="10" height="9" fill="none" stroke="#909090" stroke-width="0.5" stroke-dasharray="1 1"/><rect x="700.5" y="20" width="8" height="5" rx="0.8" fill="#8a8a8a"/><path d="M702 20v-2a2.5 2.5 0 0 1 5 0v2" stroke="#8a8a8a" stroke-width="1.1" fill="none"/><rect x="712.5" y="20" width="8" height="5" rx="0.8" fill="#8a8a8a"/><path d="M718 20v-2.5a2.5 2.5 0 0 1 5 0" stroke="#8a8a8a" stroke-width="1.1" fill="none"/><rect x="730" y="16" width="9" height="8" fill="none" stroke="#3aa8e0" stroke-width="0.9" stroke-dasharray="1.5 1"/><circle cx="736" cy="22" r="2.8" fill="#f04a6a"/><path d="M734.5 23.5l3-3" stroke="#fff" stroke-width="0.7"/><rect x="744" y="15.5" width="6" height="9" fill="none" stroke="#d0d0d0" stroke-width="0.8"/><circle cx="750" cy="21.5" r="2.5" stroke="#f07090" stroke-width="0.9" fill="none"/><path d="M751.8 23.3l1.8 1.8" stroke="#f07090" stroke-width="0.9"/><rect x="757.5" y="15.5" width="7" height="7" fill="#e0e0e0"/><path d="M757.5 17.5h7M757.5 19.5h7" stroke="#888" stroke-width="0.4"/><rect x="756" y="23.5" width="10" height="1.2" fill="#3aa8e0"/><rect x="774.5" y="15.5" width="10" height="9.5" rx="1" fill="#e8e0b0"/><path d="M776 24l4-5 3-3" stroke="#a08040" stroke-width="0.7" fill="none"/><circle cx="777" cy="22.5" r="2" fill="#f06080"/><rect x="780.5" y="18" width="3.5" height="5" fill="#30a040"/></svg>
<div class="ab" style="left:419.7px;top:15px;width:0.8px;height:11px;background:#3c3e43;"></div>
<div class="ab" style="left:437px;top:15px;width:0.8px;height:11px;background:#3c3e43;"></div>
<div class="ab" style="left:481px;top:15px;width:0.8px;height:11px;background:#3c3e43;"></div>
<div class="ab" style="left:512.6px;top:15px;width:0.8px;height:11px;background:#3c3e43;"></div>
<div class="ab" style="left:529px;top:15px;width:0.8px;height:11px;background:#3c3e43;"></div>
<div class="ab" style="left:615px;top:15px;width:0.8px;height:11px;background:#3c3e43;"></div>
<div class="ab" style="left:727px;top:15px;width:0.8px;height:11px;background:#3c3e43;"></div>
<div class="ab" style="left:770.5px;top:15px;width:0.8px;height:11px;background:#3c3e43;"></div>
<div class="ab" style="left:402.5px;top:27.5px;width:393.0px;height:15px;background:#2a2c30;"></div>
<div class="ab" style="left:404.7px;top:28.8px;width:87.30000000000001px;height:13.099999999999998px;background:#26282b;border:0.8px solid #3a3c40;border-radius:2.5px"></div>
<div class="t" style="left:408.2px;top:32.15px;font-size:7.24px;color:#d8d8d8;">Track: use netclass width</div>
<svg width="8" height="5" style="left:482px;top:32.85px"><path d="M1 1l3 3 3-3" stroke="#d0d0d0" stroke-width="0.9" fill="none"/></svg>
<div class="ab" style="left:493.8px;top:28.3px;width:13.2px;height:13.8px;background:#3a2c5a;border-radius:1.5px"></div>
<svg width="800" height="440" style="left:0;top:0"><path d="M497 31v7a1.5 1.5 0 0 0 1.5 1.5h3.5a1.5 1.5 0 0 0 1.5-1.5v-7" stroke="#d8d8e8" stroke-width="1" fill="none"/><rect x="499" y="33" width="2.8" height="2" fill="#a0a0c0"/><circle cx="500.3" cy="39.5" r="1.2" fill="#3ab0f0"/></svg>
<div class="ab" style="left:510px;top:29px;width:0.8px;height:12px;background:#3c3e43;"></div>
<div class="ab" style="left:511.6px;top:28.8px;width:127.39999999999998px;height:13.099999999999998px;background:#26282b;border:0.8px solid #3a3c40;border-radius:2.5px"></div>
<div class="t" style="left:515.1px;top:32.15px;font-size:7.24px;color:#d8d8d8;">Via: use netclass sizes</div>
<svg width="8" height="5" style="left:629px;top:32.85px"><path d="M1 1l3 3 3-3" stroke="#d0d0d0" stroke-width="0.9" fill="none"/></svg>
<div class="ab" style="left:641.5px;top:29px;width:0.8px;height:12px;background:#3c3e43;"></div>
<div class="ab" style="left:644.7px;top:28.8px;width:62.5px;height:13.099999999999998px;background:#26282b;border:0.8px solid #3a3c40;border-radius:2.5px"></div>
<div class="t" style="left:655px;top:32.15px;font-size:7.24px;color:#d8d8d8;">F.Cu (PgUp)</div>
<svg width="8" height="5" style="left:697.2px;top:32.85px"><path d="M1 1l3 3 3-3" stroke="#d0d0d0" stroke-width="0.9" fill="none"/></svg>
<div class="ab" style="left:648px;top:32.5px;width:4.8px;height:4.8px;background:#e02828;"></div>
<svg width="800" height="440" style="left:0;top:0"><path d="M710 29.5h11v12h-11z" fill="#4a90e0"/><path d="M710 29.5h8l-5 12h-3z" fill="#e03030"/></svg>
<div class="ab" style="left:724.5px;top:29px;width:0.8px;height:12px;background:#3c3e43;"></div>
<div class="ab" style="left:727px;top:28.8px;width:67.5px;height:13.099999999999998px;background:#26282b;border:0.8px solid #3a3c40;border-radius:2.5px"></div>
<div class="t" style="left:730.5px;top:32.15px;font-size:7.24px;color:#d8d8d8;">0.2500 mm (9.84 m...</div>
<svg width="8" height="5" style="left:784.5px;top:32.85px"><path d="M1 1l3 3 3-3" stroke="#d0d0d0" stroke-width="0.9" fill="none"/></svg>
<div class="ab" style="left:402.5px;top:42.5px;width:14.5px;height:370px;background:#2a2c30;"></div>
<div class="ab" style="left:682.5px;top:42.5px;width:15.5px;height:370px;background:#2a2c30;"></div>
<div class="ab" style="left:402.5px;top:412px;width:295.5px;height:17px;background:#2a2c30;"></div>
<div class="ab" style="left:402.5px;top:429px;width:393px;height:10.5px;background:#1f2023;border-radius:0 0 4px 4px"></div>
<div class="t" style="left:407.5px;top:413.5px;font-size:7.02px;color:#7a7c80;">Pads</div>
<div class="t" style="left:407.5px;top:421.5px;font-size:7.02px;color:#7a7c80;">146</div>
<div class="t" style="left:432.5px;top:413.5px;font-size:7.02px;color:#7a7c80;">Vias</div>
<div class="t" style="left:432.5px;top:421.5px;font-size:7.02px;color:#7a7c80;">17</div>
<div class="t" style="left:455.5px;top:413.5px;font-size:7.02px;color:#7a7c80;">Track Segments</div>
<div class="t" style="left:455.5px;top:421.5px;font-size:7.02px;color:#7a7c80;">173</div>
<div class="t" style="left:508.7px;top:413.5px;font-size:7.02px;color:#7a7c80;">Nets</div>
<div class="t" style="left:508.7px;top:421.5px;font-size:7.02px;color:#7a7c80;">32</div>
<div class="t" style="left:533.7px;top:413.5px;font-size:7.02px;color:#7a7c80;">Unrouted</div>
<div class="t" style="left:533.7px;top:421.5px;font-size:7.02px;color:#7a7c80;">57</div>
<div class="t" style="left:404.5px;top:430.5px;font-size:7.57px;color:#e0e0e0;">Z 1.61</div>
<div class="t" style="left:440px;top:430.5px;font-size:7.57px;color:#e0e0e0;">X 174.0000 Y 38.5000</div>
<div class="t" style="left:519.5px;top:430.5px;font-size:7.57px;color:#e0e0e0;">dx 174.0000 dy 38.5000 dist 178.2084</div>
<div class="t" style="left:646px;top:430.5px;font-size:7.57px;color:#e0e0e0;">grid 0.2500</div>
<div class="t" style="left:737.5px;top:430.5px;font-size:7.57px;color:#e0e0e0;">mm</div>
<div class="t" style="left:765px;top:430.5px;font-size:7.57px;color:#e0e0e0;">Select item(s)</div>
<div class="ab" style="left:417px;top:42.5px;width:265.5px;height:369.5px;background:#001023;border-radius:0 0 5px 5px"></div>
<svg width="800" height="440" style="left:0;top:0"><defs><clipPath id="cv"><path d="M417 42.5h265.5v364.5a5 5 0 0 1 -5 5h-255.5a5 5 0 0 1 -5 -5z"/></clipPath><pattern id="gd" x="421.2" y="43.1" width="6.09" height="6.09" patternUnits="userSpaceOnUse"><rect x="-0.1" y="-0.1" width="1.2" height="1.2" fill="#262f3e"/></pattern><pattern id="gdb" x="421.2" y="43.1" width="6.09" height="60.9" patternUnits="userSpaceOnUse"><rect x="-0.1" y="30.35" width="1.2" height="1.2" fill="#465060"/></pattern><pattern id="gdc" x="421.2" y="43.1" width="60.9" height="6.09" patternUnits="userSpaceOnUse"><rect x="-0.1" y="-0.1" width="1.2" height="1.2" fill="#465060"/></pattern><pattern id="gdd" x="421.2" y="43.1" width="60.9" height="60.9" patternUnits="userSpaceOnUse"><rect x="-0.2" y="30.25" width="1.5" height="1.5" fill="#909498"/></pattern></defs><g clip-path="url(#cv)"><rect x="417" y="42.5" width="266" height="370" fill="url(#gd)"/><rect x="417" y="42.5" width="266" height="370" fill="url(#gdb)"/><rect x="417" y="42.5" width="266" height="370" fill="url(#gdc)"/><rect x="417" y="42.5" width="266" height="370" fill="url(#gdd)"/><path d="M585 45.7h33.6M601.9 43v19.3" stroke="#3a4858" stroke-width="1.2"/><rect x="445.8" y="117.8" width="212" height="121.8" fill="#924456" stroke="#6a2038" stroke-width="0.8"/><rect x="446.3" y="118.3" width="211" height="120.8" fill="none" stroke="#b85070" stroke-width="0.7"/><path d="M480.8 118 L480.8 124" stroke="#b04058" stroke-width="2" fill="none" stroke-linejoin="round"/><path d="M499 138 L505 146 L568.7 146 L574 151 L590 151" stroke="#b04058" stroke-width="2" fill="none" stroke-linejoin="round"/><path d="M503 142 L508 149.5 L566 149.5 L572 155 L588 155" stroke="#b04058" stroke-width="2" fill="none" stroke-linejoin="round"/><path d="M523.3 138 L523.3 150 L530 157" stroke="#b04058" stroke-width="2" fill="none" stroke-linejoin="round"/><path d="M512 152 L512 162 L530 170" stroke="#b04058" stroke-width="2" fill="none" stroke-linejoin="round"/><path d="M470 142 L470 146" stroke="#b04058" stroke-width="2" fill="none" stroke-linejoin="round"/><path d="M540 140 L530 150 L510 150" stroke="#b04058" stroke-width="2" fill="none" stroke-linejoin="round"/><path d="M560 140 L570 148" stroke="#b04058" stroke-width="2" fill="none" stroke-linejoin="round"/><path d="M497 188 L510 195 L520 208 L533 208" stroke="#b04058" stroke-width="2" fill="none" stroke-linejoin="round"/><path d="M520 186 L528 192 L528 214 L535 220" stroke="#b04058" stroke-width="2" fill="none" stroke-linejoin="round"/><path d="M462 195 L462 212" stroke="#b04058" stroke-width="2" fill="none" stroke-linejoin="round"/><path d="M510 218 L525 222 L535 222" stroke="#b04058" stroke-width="2" fill="none" stroke-linejoin="round"/><path d="M563 210 L575 215 L594 215 L594 203" stroke="#b04058" stroke-width="2" fill="none" stroke-linejoin="round"/><path d="M480 205 L485 212 L505 212" stroke="#b04058" stroke-width="2" fill="none" stroke-linejoin="round"/><path d="M480.8 118 L480.8 124" stroke="#7e2236" stroke-width="1.2" fill="none" stroke-linejoin="round"/><path d="M499 138 L505 146 L568.7 146 L574 151 L590 151" stroke="#7e2236" stroke-width="1.2" fill="none" stroke-linejoin="round"/><path d="M503 142 L508 149.5 L566 149.5 L572 155 L588 155" stroke="#7e2236" stroke-width="1.2" fill="none" stroke-linejoin="round"/><path d="M523.3 138 L523.3 150 L530 157" stroke="#7e2236" stroke-width="1.2" fill="none" stroke-linejoin="round"/><path d="M512 152 L512 162 L530 170" stroke="#7e2236" stroke-width="1.2" fill="none" stroke-linejoin="round"/><path d="M470 142 L470 146" stroke="#7e2236" stroke-width="1.2" fill="none" stroke-linejoin="round"/><path d="M540 140 L530 150 L510 150" stroke="#7e2236" stroke-width="1.2" fill="none" stroke-linejoin="round"/><path d="M560 140 L570 148" stroke="#7e2236" stroke-width="1.2" fill="none" stroke-linejoin="round"/><path d="M497 188 L510 195 L520 208 L533 208" stroke="#7e2236" stroke-width="1.2" fill="none" stroke-linejoin="round"/><path d="M520 186 L528 192 L528 214 L535 220" stroke="#7e2236" stroke-width="1.2" fill="none" stroke-linejoin="round"/><path d="M462 195 L462 212" stroke="#7e2236" stroke-width="1.2" fill="none" stroke-linejoin="round"/><path d="M510 218 L525 222 L535 222" stroke="#7e2236" stroke-width="1.2" fill="none" stroke-linejoin="round"/><path d="M563 210 L575 215 L594 215 L594 203" stroke="#7e2236" stroke-width="1.2" fill="none" stroke-linejoin="round"/><path d="M480 205 L485 212 L505 212" stroke="#7e2236" stroke-width="1.2" fill="none" stroke-linejoin="round"/><path d="M479.7 132 L479.7 146 L482.9 151" stroke="#1c2a5a" stroke-width="1.9" fill="none" stroke-linejoin="round"/><path d="M491.7 132 L491.7 146 L488.3 151" stroke="#1c2a5a" stroke-width="1.9" fill="none" stroke-linejoin="round"/><path d="M547.8 132 L547.8 144 L531.5 160.5" stroke="#1c2a5a" stroke-width="1.9" fill="none" stroke-linejoin="round"/><path d="M557 132 L557 146 L548.5 155 L548.5 178.2" stroke="#1c2a5a" stroke-width="1.9" fill="none" stroke-linejoin="round"/><path d="M496 166.6 L540.3 166.6" stroke="#1c2a5a" stroke-width="1.9" fill="none" stroke-linejoin="round"/><path d="M496 170.7 L540.3 170.7" stroke="#1c2a5a" stroke-width="1.9" fill="none" stroke-linejoin="round"/><path d="M530 178.5 L540.3 178.5" stroke="#1c2a5a" stroke-width="1.9" fill="none" stroke-linejoin="round"/><path d="M498 181 L512 186 L540.3 184.6" stroke="#1c2a5a" stroke-width="1.9" fill="none" stroke-linejoin="round"/><path d="M458 178 L470 170.7" stroke="#1c2a5a" stroke-width="1.9" fill="none" stroke-linejoin="round"/><path d="M458 184 L472 176" stroke="#1c2a5a" stroke-width="1.9" fill="none" stroke-linejoin="round"/><path d="M458 190 L475 180" stroke="#1c2a5a" stroke-width="1.9" fill="none" stroke-linejoin="round"/><path d="M460.4 192.6 L468 186" stroke="#1c2a5a" stroke-width="1.9" fill="none" stroke-linejoin="round"/><path d="M452.9 165 L452.9 155 Q452.9 148.9 459 148.9 L464.5 148.9 L470 153.7" stroke="#1c2a5a" stroke-width="1.9" fill="none" stroke-linejoin="round"/><path d="M461.5 165 L461.5 158 L466 156" stroke="#1c2a5a" stroke-width="1.9" fill="none" stroke-linejoin="round"/><path d="M558.7 165.5 L574.2 170.5" stroke="#1c2a5a" stroke-width="1.9" fill="none" stroke-linejoin="round"/><path d="M558.7 184 L574.2 176.8 L590.5 190" stroke="#1c2a5a" stroke-width="1.9" fill="none" stroke-linejoin="round"/><path d="M558.7 203 L562 206 L604 206 L615 199 L615 179 L610 176" stroke="#1c2a5a" stroke-width="1.9" fill="none" stroke-linejoin="round"/><path d="M590.5 190 L595 203" stroke="#1c2a5a" stroke-width="1.9" fill="none" stroke-linejoin="round"/><path d="M564.2 161.8 L574 155 L590.5 158" stroke="#1c2a5a" stroke-width="1.9" fill="none" stroke-linejoin="round"/><path d="M564.2 178.2 L572 190 L585 198.2" stroke="#1c2a5a" stroke-width="1.9" fill="none" stroke-linejoin="round"/><path d="M540 196.9 L520 196.9 L505 205" stroke="#1c2a5a" stroke-width="1.9" fill="none" stroke-linejoin="round"/><path d="M540 203 L512 203" stroke="#1c2a5a" stroke-width="1.9" fill="none" stroke-linejoin="round"/><path d="M475 160 L490.4 163.9 L495.8 151.2" stroke="#1c2a5a" stroke-width="1.9" fill="none" stroke-linejoin="round"/><path d="M479.7 132 L479.7 146 L482.9 151" stroke="#2f64b4" stroke-width="1.1" fill="none" stroke-linejoin="round"/><path d="M491.7 132 L491.7 146 L488.3 151" stroke="#2f64b4" stroke-width="1.1" fill="none" stroke-linejoin="round"/><path d="M547.8 132 L547.8 144 L531.5 160.5" stroke="#2f64b4" stroke-width="1.1" fill="none" stroke-linejoin="round"/><path d="M557 132 L557 146 L548.5 155 L548.5 178.2" stroke="#2f64b4" stroke-width="1.1" fill="none" stroke-linejoin="round"/><path d="M496 166.6 L540.3 166.6" stroke="#2f64b4" stroke-width="1.1" fill="none" stroke-linejoin="round"/><path d="M496 170.7 L540.3 170.7" stroke="#2f64b4" stroke-width="1.1" fill="none" stroke-linejoin="round"/><path d="M530 178.5 L540.3 178.5" stroke="#2f64b4" stroke-width="1.1" fill="none" stroke-linejoin="round"/><path d="M498 181 L512 186 L540.3 184.6" stroke="#2f64b4" stroke-width="1.1" fill="none" stroke-linejoin="round"/><path d="M458 178 L470 170.7" stroke="#2f64b4" stroke-width="1.1" fill="none" stroke-linejoin="round"/><path d="M458 184 L472 176" stroke="#2f64b4" stroke-width="1.1" fill="none" stroke-linejoin="round"/><path d="M458 190 L475 180" stroke="#2f64b4" stroke-width="1.1" fill="none" stroke-linejoin="round"/><path d="M460.4 192.6 L468 186" stroke="#2f64b4" stroke-width="1.1" fill="none" stroke-linejoin="round"/><path d="M452.9 165 L452.9 155 Q452.9 148.9 459 148.9 L464.5 148.9 L470 153.7" stroke="#2f64b4" stroke-width="1.1" fill="none" stroke-linejoin="round"/><path d="M461.5 165 L461.5 158 L466 156" stroke="#2f64b4" stroke-width="1.1" fill="none" stroke-linejoin="round"/><path d="M558.7 165.5 L574.2 170.5" stroke="#2f64b4" stroke-width="1.1" fill="none" stroke-linejoin="round"/><path d="M558.7 184 L574.2 176.8 L590.5 190" stroke="#2f64b4" stroke-width="1.1" fill="none" stroke-linejoin="round"/><path d="M558.7 203 L562 206 L604 206 L615 199 L615 179 L610 176" stroke="#2f64b4" stroke-width="1.1" fill="none" stroke-linejoin="round"/><path d="M590.5 190 L595 203" stroke="#2f64b4" stroke-width="1.1" fill="none" stroke-linejoin="round"/><path d="M564.2 161.8 L574 155 L590.5 158" stroke="#2f64b4" stroke-width="1.1" fill="none" stroke-linejoin="round"/><path d="M564.2 178.2 L572 190 L585 198.2" stroke="#2f64b4" stroke-width="1.1" fill="none" stroke-linejoin="round"/><path d="M540 196.9 L520 196.9 L505 205" stroke="#2f64b4" stroke-width="1.1" fill="none" stroke-linejoin="round"/><path d="M540 203 L512 203" stroke="#2f64b4" stroke-width="1.1" fill="none" stroke-linejoin="round"/><path d="M475 160 L490.4 163.9 L495.8 151.2" stroke="#2f64b4" stroke-width="1.1" fill="none" stroke-linejoin="round"/><path d="M460.4 174.2 L472 163" stroke="#141420" stroke-width="2.2"/><rect x="450.8" y="122.6" width="17.6" height="17.3" fill="#c83a82"/><circle cx="459.6" cy="131.2" r="7.2" fill="#d04a8a" stroke="#e060a0" stroke-width="0.5"/><circle cx="459.6" cy="131.2" r="4.6" fill="#2ec4e0"/><rect x="636.2" y="122.6" width="17.6" height="17.3" fill="#c83a82"/><circle cx="645" cy="131.2" r="7.2" fill="#d04a8a" stroke="#e060a0" stroke-width="0.5"/><circle cx="645" cy="131.2" r="4.6" fill="#2ec4e0"/><rect x="450.8" y="217.9" width="17.6" height="17.3" fill="#c83a82"/><circle cx="459.6" cy="226.5" r="7.2" fill="#d04a8a" stroke="#e060a0" stroke-width="0.5"/><circle cx="459.6" cy="226.5" r="4.6" fill="#2ec4e0"/><rect x="636.2" y="217.9" width="17.6" height="17.3" fill="#c83a82"/><circle cx="645" cy="226.5" r="7.2" fill="#d04a8a" stroke="#e060a0" stroke-width="0.5"/><circle cx="645" cy="226.5" r="4.6" fill="#2ec4e0"/><text x="599.3" y="130.5" font-size="5" fill="#e8a080" font-family="Liberation Mono" text-anchor="middle">MARIAN SCIENTIFIC</text><text x="599.3" y="135.6" font-size="5" fill="#e8a080" font-family="Liberation Mono" text-anchor="middle">03000-007</text><text x="599.3" y="141.4" font-size="5" fill="#e8a080" font-family="Liberation Mono" text-anchor="middle">2026-03-01</text><text x="537" y="229" font-size="3.6" fill="#e8a080" font-family="Liberation Mono" textLength="32" lengthAdjust="spacingAndGlyphs">BOARD: 87x50MM</text><text x="537" y="233.2" font-size="3.6" fill="#e8a080" font-family="Liberation Mono" textLength="32" lengthAdjust="spacingAndGlyphs">MOUNT: 76x39MM</text><text x="465.5" y="116.3" font-size="3.6" fill="#e0d8d8" font-family="Liberation Mono" textLength="110" lengthAdjust="spacingAndGlyphs">Screw_Terminal_01x02 Screw_Terminal_01x02 Screw_Terminal_01x02</text><text x="0" y="0" font-size="3.6" fill="#d0d0d8" font-family="Liberation Mono" transform="translate(440.5 124) rotate(90)" textLength="70" lengthAdjust="spacingAndGlyphs">USB_B_Mini_Receptacle_USB_2.0_1</text><path d="M472 118h94" stroke="#d040c0" stroke-width="0.6"/><rect x="465.8" y="192" width="5.4" height="21.4" fill="#e89878"/><rect x="461" y="198.1" width="15" height="4.1" fill="#e89878"/><rect x="472.9" y="118" width="26.30000000000001" height="24.5" fill="none" stroke="#d04080" stroke-width="0.6"/><rect x="473.9" y="119" width="24.30000000000001" height="22.5" fill="none" stroke="#e8906a" stroke-width="0.5"/><path d="M473.9 123.4h24.30000000000001M473.9 136.3h24.30000000000001" stroke="#e8906a" stroke-width="0.45"/><circle cx="479.7" cy="129.4" r="3.8000000000000003" fill="#4a1428"/><circle cx="479.7" cy="129.4" r="3.2" fill="#d83a2a"/><circle cx="479.7" cy="129.4" r="2.2399999999999998" fill="#f08a20"/><circle cx="479.7" cy="129.4" r="1.344" fill="#10141c"/><rect x="487.9" y="125.60000000000001" width="7.6000000000000005" height="7.6000000000000005" rx="2" fill="#4a1428"/><rect x="488.5" y="126.2" width="6.4" height="6.4" rx="1.6" fill="#d83a2a"/><circle cx="491.7" cy="129.4" r="2.2399999999999998" fill="#f08a20"/><circle cx="491.7" cy="129.4" r="1.344" fill="#10141c"/><rect x="506" y="118" width="26.299999999999955" height="24.5" fill="none" stroke="#d04080" stroke-width="0.6"/><rect x="507" y="119" width="24.299999999999955" height="22.5" fill="none" stroke="#e8906a" stroke-width="0.5"/><path d="M507 123.4h24.299999999999955M507 136.3h24.299999999999955" stroke="#e8906a" stroke-width="0.45"/><circle cx="513.2" cy="129.4" r="3.8000000000000003" fill="#4a1428"/><circle cx="513.2" cy="129.4" r="3.2" fill="#d83a2a"/><circle cx="513.2" cy="129.4" r="2.2399999999999998" fill="#f08a20"/><circle cx="513.2" cy="129.4" r="1.344" fill="#10141c"/><rect x="521.5999999999999" y="125.60000000000001" width="7.6000000000000005" height="7.6000000000000005" rx="2" fill="#4a1428"/><rect x="522.1999999999999" y="126.2" width="6.4" height="6.4" rx="1.6" fill="#d83a2a"/><circle cx="525.4" cy="129.4" r="2.2399999999999998" fill="#f08a20"/><circle cx="525.4" cy="129.4" r="1.344" fill="#10141c"/><rect x="538.4" y="118" width="26.600000000000023" height="24.5" fill="none" stroke="#d04080" stroke-width="0.6"/><rect x="539.4" y="119" width="24.600000000000023" height="22.5" fill="none" stroke="#e8906a" stroke-width="0.5"/><path d="M539.4 123.4h24.600000000000023M539.4 136.3h24.600000000000023" stroke="#e8906a" stroke-width="0.45"/><circle cx="545.5" cy="129.4" r="3.8000000000000003" fill="#4a1428"/><circle cx="545.5" cy="129.4" r="3.2" fill="#d83a2a"/><circle cx="545.5" cy="129.4" r="2.2399999999999998" fill="#f08a20"/><circle cx="545.5" cy="129.4" r="1.344" fill="#10141c"/><rect x="553.1999999999999" y="125.60000000000001" width="7.6000000000000005" height="7.6000000000000005" rx="2" fill="#4a1428"/><rect x="553.8" y="126.2" width="6.4" height="6.4" rx="1.6" fill="#d83a2a"/><circle cx="557" cy="129.4" r="2.2399999999999998" fill="#f08a20"/><circle cx="557" cy="129.4" r="1.344" fill="#10141c"/><circle cx="452.4" cy="144.5" r="2.3" fill="#c03030"/><circle cx="452.4" cy="144.5" r="1.1" fill="#2a2a30"/><circle cx="461" cy="144.5" r="2.3" fill="#c03030"/><circle cx="461" cy="144.5" r="1.1" fill="#2a2a30"/><circle cx="452.4" cy="165.2" r="2.3" fill="#c03030"/><circle cx="452.4" cy="165.2" r="1.1" fill="#2a2a30"/><circle cx="461.5" cy="165.2" r="2.3" fill="#c03030"/><circle cx="461.5" cy="165.2" r="1.1" fill="#2a2a30"/><path d="M445 140v26" stroke="#c040c0" stroke-width="1.5"/><rect x="448" y="170" width="9.5" height="27" fill="none" stroke="#c040a0" stroke-width="0.6"/><circle cx="452.4" cy="173.6" r="3.0" fill="#4a1428"/><circle cx="452.4" cy="173.6" r="2.4" fill="#d83a2a"/><circle cx="452.4" cy="173.6" r="1.68" fill="#f08a20"/><circle cx="452.4" cy="173.6" r="1.008" fill="#10141c"/><circle cx="452.4" cy="180" r="3.0" fill="#4a1428"/><circle cx="452.4" cy="180" r="2.4" fill="#d83a2a"/><circle cx="452.4" cy="180" r="1.68" fill="#f08a20"/><circle cx="452.4" cy="180" r="1.008" fill="#10141c"/><circle cx="452.4" cy="186.6" r="3.0" fill="#4a1428"/><circle cx="452.4" cy="186.6" r="2.4" fill="#d83a2a"/><circle cx="452.4" cy="186.6" r="1.68" fill="#f08a20"/><circle cx="452.4" cy="186.6" r="1.008" fill="#10141c"/><circle cx="452.4" cy="192.7" r="3.0" fill="#4a1428"/><circle cx="452.4" cy="192.7" r="2.4" fill="#d83a2a"/><circle cx="452.4" cy="192.7" r="1.68" fill="#f08a20"/><circle cx="452.4" cy="192.7" r="1.008" fill="#10141c"/><circle cx="485" cy="151.3" r="6.3" fill="#c06868" stroke="#f0c8a0" stroke-width="0.6"/><rect x="484" y="145.5" width="2" height="11.5" fill="#f0e090"/><circle cx="482.7" cy="151.3" r="2.8000000000000003" fill="#4a1428"/><circle cx="482.7" cy="151.3" r="2.2" fill="#d83a2a"/><circle cx="482.7" cy="151.3" r="1.54" fill="#f08a20"/><circle cx="482.7" cy="151.3" r="0.924" fill="#10141c"/><circle cx="488.3" cy="151.3" r="2.8000000000000003" fill="#4a1428"/><circle cx="488.3" cy="151.3" r="2.2" fill="#d83a2a"/><circle cx="488.3" cy="151.3" r="1.54" fill="#f08a20"/><circle cx="488.3" cy="151.3" r="0.924" fill="#10141c"/><rect x="469.9" y="168.9" width="26.6" height="18.3" fill="none" stroke="#c040a0" stroke-width="0.6"/><rect x="472" y="174.5" width="22" height="7" fill="none" stroke="#e8a080" stroke-width="0.4"/><rect x="470.3" y="169.8" width="1.8" height="3.8" fill="#e8302a"/><rect x="470.3" y="182.5" width="1.8" height="3.8" fill="#e8302a"/><rect x="473.61" y="169.8" width="1.8" height="3.8" fill="#e8302a"/><rect x="473.61" y="182.5" width="1.8" height="3.8" fill="#e8302a"/><rect x="476.92" y="169.8" width="1.8" height="3.8" fill="#e8302a"/><rect x="476.92" y="182.5" width="1.8" height="3.8" fill="#e8302a"/><rect x="480.23" y="169.8" width="1.8" height="3.8" fill="#e8302a"/><rect x="480.23" y="182.5" width="1.8" height="3.8" fill="#e8302a"/><rect x="483.54" y="169.8" width="1.8" height="3.8" fill="#e8302a"/><rect x="483.54" y="182.5" width="1.8" height="3.8" fill="#e8302a"/><rect x="486.85" y="169.8" width="1.8" height="3.8" fill="#e8302a"/><rect x="486.85" y="182.5" width="1.8" height="3.8" fill="#e8302a"/><rect x="490.16" y="169.8" width="1.8" height="3.8" fill="#e8302a"/><rect x="490.16" y="182.5" width="1.8" height="3.8" fill="#e8302a"/><rect x="493.47" y="169.8" width="1.8" height="3.8" fill="#e8302a"/><rect x="493.47" y="182.5" width="1.8" height="3.8" fill="#e8302a"/><path d="M506 175 q-2 -18 6 -25 q7 -4 13 2 q8 10 8 25 q0 14 -2 22 M509 165 q2 -9 8 -9 q6 2 5 10 q-1 8 -7 9 q-6 -1 -6 -10 M512 178 q6 6 14 2 M505 190 q3 8 10 10 M526 152 q10 6 12 22 q2 14 -4 26" stroke="#e8a898" stroke-width="0.6" fill="none"/><rect x="503" y="168.5" width="14" height="2.6" fill="#e8e0e8" opacity="0.85"/><rect x="506" y="172.5" width="10" height="1.6" fill="#d8c8d0" opacity="0.7"/><rect x="484.2" y="194.6" width="8.4" height="17.199999999999996" rx="1.5" fill="none" stroke="#d040a0" stroke-width="0.5"/><rect x="485.59999999999997" y="196.3" width="5.6" height="4.2" fill="#e8302a"/><rect x="485.59999999999997" y="205.9" width="5.6" height="4.2" fill="#e8302a"/><rect x="486.9" y="202.6" width="3" height="1.2" fill="#e8c8c0" opacity="0.6"/><rect x="484.2" y="213.2" width="8.4" height="17.6" rx="1.5" fill="none" stroke="#d040a0" stroke-width="0.5"/><rect x="485.59999999999997" y="214.9" width="5.6" height="4.2" fill="#e8302a"/><rect x="485.59999999999997" y="224.9" width="5.6" height="4.2" fill="#e8302a"/><rect x="486.9" y="221.4" width="3" height="1.2" fill="#e8c8c0" opacity="0.6"/><rect x="496.5" y="194.6" width="8.4" height="17.199999999999996" rx="1.5" fill="none" stroke="#d040a0" stroke-width="0.5"/><rect x="497.9" y="196.3" width="5.6" height="4.2" fill="#e8302a"/><rect x="497.9" y="205.9" width="5.6" height="4.2" fill="#e8302a"/><rect x="499.2" y="202.6" width="3" height="1.2" fill="#e8c8c0" opacity="0.6"/><rect x="496.5" y="213.2" width="8.4" height="17.6" rx="1.5" fill="none" stroke="#d040a0" stroke-width="0.5"/><rect x="497.9" y="214.9" width="5.6" height="4.2" fill="#e8302a"/><rect x="497.9" y="224.9" width="5.6" height="4.2" fill="#e8302a"/><rect x="499.2" y="221.4" width="3" height="1.2" fill="#e8c8c0" opacity="0.6"/><rect x="586.6999999999999" y="154.6" width="8.4" height="16.899999999999984" rx="1.5" fill="none" stroke="#d040a0" stroke-width="0.5"/><rect x="588.1" y="156.3" width="5.6" height="4.2" fill="#e8302a"/><rect x="588.1" y="165.6" width="5.6" height="4.2" fill="#e8302a"/><rect x="589.4" y="162.45000000000002" width="3" height="1.2" fill="#e8c8c0" opacity="0.6"/><rect x="586.6999999999999" y="173.1" width="8.4" height="17.500000000000007" rx="1.5" fill="none" stroke="#d040a0" stroke-width="0.5"/><rect x="588.1" y="174.8" width="5.6" height="4.2" fill="#e8302a"/><rect x="588.1" y="184.70000000000002" width="5.6" height="4.2" fill="#e8302a"/><rect x="589.4" y="181.25000000000003" width="3" height="1.2" fill="#e8c8c0" opacity="0.6"/><rect x="602.6999999999999" y="154.6" width="8.4" height="16.899999999999984" rx="1.5" fill="none" stroke="#d040a0" stroke-width="0.5"/><rect x="604.1" y="156.3" width="5.6" height="4.2" fill="#e8302a"/><rect x="604.1" y="165.6" width="5.6" height="4.2" fill="#e8302a"/><rect x="605.4" y="162.45000000000002" width="3" height="1.2" fill="#e8c8c0" opacity="0.6"/><rect x="602.6999999999999" y="173.1" width="8.4" height="17.500000000000007" rx="1.5" fill="none" stroke="#d040a0" stroke-width="0.5"/><rect x="604.1" y="174.8" width="5.6" height="4.2" fill="#e8302a"/><rect x="604.1" y="184.70000000000002" width="5.6" height="4.2" fill="#e8302a"/><rect x="605.4" y="181.25000000000003" width="3" height="1.2" fill="#e8c8c0" opacity="0.6"/><path d="M595 157.3h7M595 188.4h7" stroke="#2f64b4" stroke-width="1.1"/><rect x="513.5" y="178" width="5" height="4" fill="#e8302a"/><rect x="512.5" y="177" width="7" height="6" fill="none" stroke="#c040a0" stroke-width="0.4"/><rect x="521.5" y="182" width="5" height="4" fill="#e8302a"/><rect x="520.5" y="181" width="7" height="6" fill="none" stroke="#c040a0" stroke-width="0.4"/><rect x="518.5" y="188" width="5" height="4" fill="#e8302a"/><rect x="517.5" y="187" width="7" height="6" fill="none" stroke="#c040a0" stroke-width="0.4"/><rect x="569.0" y="196.2" width="5" height="4" fill="#e8302a"/><rect x="568.0" y="195.2" width="7" height="6" fill="none" stroke="#c040a0" stroke-width="0.4"/><rect x="582.5" y="196.2" width="5" height="4" fill="#e8302a"/><rect x="581.5" y="195.2" width="7" height="6" fill="none" stroke="#c040a0" stroke-width="0.4"/><rect x="575.5" y="189" width="5" height="4" fill="#e8302a"/><rect x="574.5" y="188" width="7" height="6" fill="none" stroke="#c040a0" stroke-width="0.4"/><rect x="530.9" y="206.6" width="5" height="4" fill="#e8302a"/><rect x="529.9" y="205.6" width="7" height="6" fill="none" stroke="#c040a0" stroke-width="0.4"/><rect x="530.9" y="214" width="5" height="4" fill="#e8302a"/><rect x="529.9" y="213" width="7" height="6" fill="none" stroke="#c040a0" stroke-width="0.4"/><rect x="467.4" y="151.7" width="5" height="4" fill="#e8302a"/><rect x="466.4" y="150.7" width="7" height="6" fill="none" stroke="#c040a0" stroke-width="0.4"/><rect x="472.2" y="157.8" width="5" height="4" fill="#e8302a"/><rect x="471.2" y="156.8" width="7" height="6" fill="none" stroke="#c040a0" stroke-width="0.4"/><rect x="537.4" y="161.6" width="24.1" height="51.8" fill="none" stroke="#c040a0" stroke-width="0.6"/><path d="M545 213.4a4 3 0 0 1 8 0" stroke="#e8a080" stroke-width="0.5" fill="none"/><circle cx="540.2" cy="166.1" r="2.5" fill="#d83030"/><circle cx="540.2" cy="166.1" r="1.6" fill="#e8802a"/><circle cx="540.2" cy="166.1" r="0.9" fill="#3a4a30"/><circle cx="558.8" cy="166.1" r="2.5" fill="#d83030"/><circle cx="558.8" cy="166.1" r="1.6" fill="#e8802a"/><circle cx="558.8" cy="166.1" r="0.9" fill="#3a4a30"/><circle cx="540.2" cy="172.23" r="2.5" fill="#d83030"/><circle cx="540.2" cy="172.23" r="1.6" fill="#e8802a"/><circle cx="540.2" cy="172.23" r="0.9" fill="#3a4a30"/><circle cx="558.8" cy="172.23" r="2.5" fill="#d83030"/><circle cx="558.8" cy="172.23" r="1.6" fill="#e8802a"/><circle cx="558.8" cy="172.23" r="0.9" fill="#3a4a30"/><circle cx="540.2" cy="178.35999999999999" r="2.5" fill="#d83030"/><circle cx="540.2" cy="178.35999999999999" r="1.6" fill="#e8802a"/><circle cx="540.2" cy="178.35999999999999" r="0.9" fill="#3a4a30"/><circle cx="558.8" cy="178.35999999999999" r="2.5" fill="#d83030"/><circle cx="558.8" cy="178.35999999999999" r="1.6" fill="#e8802a"/><circle cx="558.8" cy="178.35999999999999" r="0.9" fill="#3a4a30"/><circle cx="540.2" cy="184.49" r="2.5" fill="#d83030"/><circle cx="540.2" cy="184.49" r="1.6" fill="#e8802a"/><circle cx="540.2" cy="184.49" r="0.9" fill="#3a4a30"/><circle cx="558.8" cy="184.49" r="2.5" fill="#d83030"/><circle cx="558.8" cy="184.49" r="1.6" fill="#e8802a"/><circle cx="558.8" cy="184.49" r="0.9" fill="#3a4a30"/><circle cx="540.2" cy="190.62" r="2.5" fill="#d83030"/><circle cx="540.2" cy="190.62" r="1.6" fill="#e8802a"/><circle cx="540.2" cy="190.62" r="0.9" fill="#3a4a30"/><circle cx="558.8" cy="190.62" r="2.5" fill="#d83030"/><circle cx="558.8" cy="190.62" r="1.6" fill="#e8802a"/><circle cx="558.8" cy="190.62" r="0.9" fill="#3a4a30"/><circle cx="540.2" cy="196.75" r="2.5" fill="#d83030"/><circle cx="540.2" cy="196.75" r="1.6" fill="#e8802a"/><circle cx="540.2" cy="196.75" r="0.9" fill="#3a4a30"/><circle cx="558.8" cy="196.75" r="2.5" fill="#d83030"/><circle cx="558.8" cy="196.75" r="1.6" fill="#e8802a"/><circle cx="558.8" cy="196.75" r="0.9" fill="#3a4a30"/><circle cx="540.2" cy="202.88" r="2.5" fill="#d83030"/><circle cx="540.2" cy="202.88" r="1.6" fill="#e8802a"/><circle cx="540.2" cy="202.88" r="0.9" fill="#3a4a30"/><circle cx="558.8" cy="202.88" r="2.5" fill="#d83030"/><circle cx="558.8" cy="202.88" r="1.6" fill="#e8802a"/><circle cx="558.8" cy="202.88" r="0.9" fill="#3a4a30"/><circle cx="540.2" cy="209.01" r="2.5" fill="#d83030"/><circle cx="540.2" cy="209.01" r="1.6" fill="#e8802a"/><circle cx="540.2" cy="209.01" r="0.9" fill="#3a4a30"/><circle cx="558.8" cy="209.01" r="2.5" fill="#d83030"/><circle cx="558.8" cy="209.01" r="1.6" fill="#e8802a"/><circle cx="558.8" cy="209.01" r="0.9" fill="#3a4a30"/><circle cx="574.5" cy="174.3" r="6" fill="#d87a6a" stroke="#f0c0a0" stroke-width="0.5"/><circle cx="574.5" cy="171" r="2.8000000000000003" fill="#4a1428"/><circle cx="574.5" cy="171" r="2.2" fill="#d83a2a"/><circle cx="574.5" cy="171" r="1.54" fill="#f08a20"/><circle cx="574.5" cy="171" r="0.924" fill="#10141c"/><circle cx="574.5" cy="177.3" r="2.8000000000000003" fill="#4a1428"/><circle cx="574.5" cy="177.3" r="2.2" fill="#d83a2a"/><circle cx="574.5" cy="177.3" r="1.54" fill="#f08a20"/><circle cx="574.5" cy="177.3" r="0.924" fill="#10141c"/><circle cx="490.4" cy="163.9" r="2" fill="#c83030"/><circle cx="490.4" cy="163.9" r="1.3" fill="#0a0a10"/><circle cx="495.8" cy="151.2" r="2" fill="#c83030"/><circle cx="495.8" cy="151.2" r="1.3" fill="#0a0a10"/><circle cx="460.4" cy="174.2" r="2" fill="#c83030"/><circle cx="460.4" cy="174.2" r="1.3" fill="#0a0a10"/><circle cx="460.6" cy="192.6" r="2" fill="#c83030"/><circle cx="460.6" cy="192.6" r="1.3" fill="#0a0a10"/><circle cx="506.7" cy="198.4" r="2" fill="#c83030"/><circle cx="506.7" cy="198.4" r="1.3" fill="#0a0a10"/><circle cx="480.8" cy="208.4" r="2" fill="#c83030"/><circle cx="480.8" cy="208.4" r="1.3" fill="#0a0a10"/><circle cx="506.7" cy="208.4" r="2" fill="#c83030"/><circle cx="506.7" cy="208.4" r="1.3" fill="#0a0a10"/><circle cx="548.5" cy="178.2" r="2" fill="#c83030"/><circle cx="548.5" cy="178.2" r="1.3" fill="#0a0a10"/><circle cx="531.5" cy="160.5" r="2" fill="#c83030"/><circle cx="531.5" cy="160.5" r="1.3" fill="#0a0a10"/><circle cx="564.2" cy="161.8" r="2" fill="#c83030"/><circle cx="564.2" cy="161.8" r="1.3" fill="#0a0a10"/><circle cx="564.2" cy="178.2" r="2" fill="#c83030"/><circle cx="564.2" cy="178.2" r="1.3" fill="#0a0a10"/><circle cx="594.2" cy="202.7" r="2" fill="#c83030"/><circle cx="594.2" cy="202.7" r="1.3" fill="#0a0a10"/><rect x="417" y="291.4" width="6" height="26.6" fill="none" stroke="#c040c0" stroke-width="0.8"/><circle cx="418" cy="305" r="3.9" fill="#e03030"/><circle cx="418" cy="305" r="1.9" fill="#1a2a48"/><path d="M417 299.5h5.5M417 311.5h5.5" stroke="#e8e080" stroke-width="0.4"/><rect x="426" y="291.4" width="25.8" height="26.6" fill="none" stroke="#c040c0" stroke-width="0.8"/><rect x="427.5" y="293" width="22.8" height="23.4" fill="none" stroke="#e8e080" stroke-width="0.4"/><rect x="429" y="301.5" width="7.2" height="7" fill="#e03030"/><circle cx="432.6" cy="305" r="2.3" fill="none" stroke="#e8d050" stroke-width="0.5"/><circle cx="432.6" cy="305" r="1.9" fill="#1a2a48"/><circle cx="444.8" cy="305" r="3.9" fill="#e03030"/><circle cx="444.8" cy="305" r="2.3" fill="none" stroke="#e8d050" stroke-width="0.5"/><circle cx="444.8" cy="305" r="1.9" fill="#1a2a48"/><path d="M427.5 299.5h23M427.5 311.5h23" stroke="#e8e080" stroke-width="0.4"/><text x="437" y="315.5" font-size="3.2" fill="#e0e0a0" font-family="Liberation Mono">J5</text><text x="437" y="290.5" font-size="3.2" fill="#e0e0a0" font-family="Liberation Mono">J5</text><text x="418" y="320.5" font-size="3" fill="#d8d8d8" font-family="Liberation Mono">Screw_Terminal_01x02</text><rect x="476.4" y="304.6" width="24.6" height="50.2" fill="none" stroke="#c040c0" stroke-width="0.8"/><rect x="481.5" y="306" width="15" height="47.5" fill="none" stroke="#e8e8a0" stroke-width="0.4"/><text x="485" y="302.2" font-size="3.2" fill="#e0e0a0" font-family="Liberation Mono">U2</text><text x="478" y="358.2" font-size="2.8" fill="#d8d8d8" font-family="Liberation Mono">SN74HC4066NE</text><circle cx="479.4" cy="309.0" r="2.5" fill="#e03030"/><circle cx="479.4" cy="309.0" r="1.5" fill="none" stroke="#e8c850" stroke-width="0.45"/><circle cx="479.4" cy="309.0" r="1.2" fill="#1a2a48"/><circle cx="497.6" cy="309.0" r="2.5" fill="#e03030"/><circle cx="497.6" cy="309.0" r="1.5" fill="none" stroke="#e8c850" stroke-width="0.45"/><circle cx="497.6" cy="309.0" r="1.2" fill="#1a2a48"/><circle cx="479.4" cy="315.17" r="2.5" fill="#e03030"/><circle cx="479.4" cy="315.17" r="1.5" fill="none" stroke="#e8c850" stroke-width="0.45"/><circle cx="479.4" cy="315.17" r="1.2" fill="#1a2a48"/><circle cx="497.6" cy="315.17" r="2.5" fill="#e03030"/><circle cx="497.6" cy="315.17" r="1.5" fill="none" stroke="#e8c850" stroke-width="0.45"/><circle cx="497.6" cy="315.17" r="1.2" fill="#1a2a48"/><circle cx="479.4" cy="321.34" r="2.5" fill="#e03030"/><circle cx="479.4" cy="321.34" r="1.5" fill="none" stroke="#e8c850" stroke-width="0.45"/><circle cx="479.4" cy="321.34" r="1.2" fill="#1a2a48"/><circle cx="497.6" cy="321.34" r="2.5" fill="#e03030"/><circle cx="497.6" cy="321.34" r="1.5" fill="none" stroke="#e8c850" stroke-width="0.45"/><circle cx="497.6" cy="321.34" r="1.2" fill="#1a2a48"/><circle cx="479.4" cy="327.51" r="2.5" fill="#e03030"/><circle cx="479.4" cy="327.51" r="1.5" fill="none" stroke="#e8c850" stroke-width="0.45"/><circle cx="479.4" cy="327.51" r="1.2" fill="#1a2a48"/><circle cx="497.6" cy="327.51" r="2.5" fill="#e03030"/><circle cx="497.6" cy="327.51" r="1.5" fill="none" stroke="#e8c850" stroke-width="0.45"/><circle cx="497.6" cy="327.51" r="1.2" fill="#1a2a48"/><circle cx="479.4" cy="333.68" r="2.5" fill="#e03030"/><circle cx="479.4" cy="333.68" r="1.5" fill="none" stroke="#e8c850" stroke-width="0.45"/><circle cx="479.4" cy="333.68" r="1.2" fill="#1a2a48"/><circle cx="497.6" cy="333.68" r="2.5" fill="#e03030"/><circle cx="497.6" cy="333.68" r="1.5" fill="none" stroke="#e8c850" stroke-width="0.45"/><circle cx="497.6" cy="333.68" r="1.2" fill="#1a2a48"/><circle cx="479.4" cy="339.85" r="2.5" fill="#e03030"/><circle cx="479.4" cy="339.85" r="1.5" fill="none" stroke="#e8c850" stroke-width="0.45"/><circle cx="479.4" cy="339.85" r="1.2" fill="#1a2a48"/><circle cx="497.6" cy="339.85" r="2.5" fill="#e03030"/><circle cx="497.6" cy="339.85" r="1.5" fill="none" stroke="#e8c850" stroke-width="0.45"/><circle cx="497.6" cy="339.85" r="1.2" fill="#1a2a48"/><circle cx="479.4" cy="346.02" r="2.5" fill="#e03030"/><circle cx="479.4" cy="346.02" r="1.5" fill="none" stroke="#e8c850" stroke-width="0.45"/><circle cx="479.4" cy="346.02" r="1.2" fill="#1a2a48"/><circle cx="497.6" cy="346.02" r="2.5" fill="#e03030"/><circle cx="497.6" cy="346.02" r="1.5" fill="none" stroke="#e8c850" stroke-width="0.45"/><circle cx="497.6" cy="346.02" r="1.2" fill="#1a2a48"/><circle cx="479.4" cy="352.19" r="2.5" fill="#e03030"/><circle cx="479.4" cy="352.19" r="1.5" fill="none" stroke="#e8c850" stroke-width="0.45"/><circle cx="479.4" cy="352.19" r="1.2" fill="#1a2a48"/><circle cx="497.6" cy="352.19" r="2.5" fill="#e03030"/><circle cx="497.6" cy="352.19" r="1.5" fill="none" stroke="#e8c850" stroke-width="0.45"/><circle cx="497.6" cy="352.19" r="1.2" fill="#1a2a48"/><line x1="481.9" y1="315.17" x2="495.1" y2="315.17" stroke="#3a9ab0" stroke-width="0.5"/><line x1="481.9" y1="327.51" x2="495.1" y2="327.51" stroke="#3a9ab0" stroke-width="0.5"/><line x1="481.9" y1="346.02" x2="495.1" y2="346.02" stroke="#3a9ab0" stroke-width="0.5"/><path d="M486 306a3 3 0 0 0 6 0" stroke="#e8e8a0" stroke-width="0.5" fill="none"/><circle cx="470.5" cy="359.5" r="6.2" fill="#f4ecd0" stroke="#e0d080" stroke-width="0.5"/><path d="M470.5 353.3v12.4" stroke="#2a2a2a" stroke-width="0.4"/><rect x="464.8" y="356.7" width="5.6000000000000005" height="5.6000000000000005" rx="2" fill="#4a1428"/><rect x="465.40000000000003" y="357.3" width="4.4" height="4.4" rx="1.6" fill="#d83a2a"/><circle cx="467.6" cy="359.5" r="1.54" fill="#f08a20"/><circle cx="467.6" cy="359.5" r="0.924" fill="#10141c"/><circle cx="473.4" cy="359.5" r="2.8000000000000003" fill="#4a1428"/><circle cx="473.4" cy="359.5" r="2.2" fill="#d83a2a"/><circle cx="473.4" cy="359.5" r="1.54" fill="#f08a20"/><circle cx="473.4" cy="359.5" r="0.924" fill="#10141c"/><text x="467" y="351" font-size="3.2" fill="#e0e0a0" font-family="Liberation Mono">C8</text><text x="465" y="369.5" font-size="2.8" fill="#d8d8d8" font-family="Liberation Mono">100uF</text><rect x="413.0" y="381.3" width="11" height="6.4" fill="#5a2040" stroke="#c040c0" stroke-width="0.5"/><rect x="413.5" y="382.3" width="2.8" height="4.4" fill="#e8302a"/><rect x="420.7" y="382.3" width="2.8" height="4.4" fill="#e8302a"/><rect x="416.5" y="381.9" width="4" height="5.2" fill="#b8b8c8"/><rect x="417.3" y="383.0" width="2.4" height="3" fill="#a040a0"/><text x="416.5" y="380.2" font-size="3" fill="#e0e0a0" font-family="Liberation Mono">R1</text><text x="416.5" y="391.0" font-size="2.8" fill="#c8c8c8" font-family="Liberation Mono">1K</text><rect x="424.0" y="381.3" width="11" height="6.4" fill="#5a2040" stroke="#c040c0" stroke-width="0.5"/><rect x="424.5" y="382.3" width="2.8" height="4.4" fill="#e8302a"/><rect x="431.7" y="382.3" width="2.8" height="4.4" fill="#e8302a"/><rect x="427.5" y="381.9" width="4" height="5.2" fill="#b8b8c8"/><rect x="428.3" y="383.0" width="2.4" height="3" fill="#a040a0"/><text x="427.5" y="380.2" font-size="3" fill="#e0e0a0" font-family="Liberation Mono">R1</text><text x="427.5" y="391.0" font-size="2.8" fill="#c8c8c8" font-family="Liberation Mono">1K</text><rect x="424.0" y="397.3" width="11" height="6.4" fill="#5a2040" stroke="#c040c0" stroke-width="0.5"/><rect x="424.5" y="398.3" width="2.8" height="4.4" fill="#e8302a"/><rect x="431.7" y="398.3" width="2.8" height="4.4" fill="#e8302a"/><rect x="427.5" y="397.9" width="4" height="5.2" fill="#b8b8c8"/><rect x="428.3" y="399.0" width="2.4" height="3" fill="#a040a0"/><text x="427.5" y="396.2" font-size="3" fill="#e0e0a0" font-family="Liberation Mono">R1</text><text x="427.5" y="407.0" font-size="2.8" fill="#c8c8c8" font-family="Liberation Mono">1K</text><line x1="475.4" y1="200" x2="478.4" y2="307" stroke="#3a9ab0" stroke-width="0.5"/><line x1="485" y1="218" x2="479.4" y2="313" stroke="#3a9ab0" stroke-width="0.5"/><line x1="500.7" y1="227" x2="497" y2="307" stroke="#3a9ab0" stroke-width="0.5"/><line x1="488" y1="227" x2="498" y2="313" stroke="#3a9ab0" stroke-width="0.5"/><line x1="533.4" y1="216" x2="499" y2="305" stroke="#3a9ab0" stroke-width="0.5"/><line x1="417" y1="309" x2="479" y2="322" stroke="#3a9ab0" stroke-width="0.5"/><line x1="417" y1="336" x2="479" y2="316" stroke="#3a9ab0" stroke-width="0.5"/><line x1="417" y1="350" x2="479" y2="327" stroke="#3a9ab0" stroke-width="0.5"/><line x1="443" y1="318" x2="430" y2="384" stroke="#3a9ab0" stroke-width="0.5"/><line x1="446" y1="318" x2="434" y2="399" stroke="#3a9ab0" stroke-width="0.5"/><line x1="434" y1="381" x2="466" y2="358" stroke="#3a9ab0" stroke-width="0.5"/><line x1="445" y1="309" x2="479" y2="316" stroke="#3a9ab0" stroke-width="0.5"/><line x1="452" y1="320" x2="479" y2="343" stroke="#3a9ab0" stroke-width="0.5"/><line x1="471" y1="358" x2="498" y2="340" stroke="#3a9ab0" stroke-width="0.5"/><line x1="417" y1="372" x2="466" y2="360" stroke="#3a9ab0" stroke-width="0.5"/><path d="M609.5 420V356.4H690M609.5 394H690M609.5 409H690" stroke="#c87ac8" stroke-width="0.7" fill="none"/><text x="612.7" y="393.3" font-size="5.2" fill="#e070d0" stroke="#e070d0" stroke-width="0.25" font-family="Liberation Sans" textLength="51" lengthAdjust="spacingAndGlyphs">MARIAN SCIENTIFIC</text><text x="612.7" y="400.3" font-size="5.2" fill="#c87ac8" font-family="Liberation Mono">Sheet:</text><text x="612.7" y="406.3" font-size="5" fill="#c87ac8" font-family="Liberation Mono">File: 03007-007.kicad_pcb</text><text x="613" y="414" font-size="5.2" fill="#c87ac8" font-family="Liberation Mono" font-weight="bold">Title:</text></g></svg>
<div class="ab" style="left:698px;top:42.5px;width:97.5px;height:386.5px;background:#2c2e32;"></div>
<div class="ab" style="left:698px;top:42.5px;width:97.5px;height:9.5px;background:#232428;"></div>
<div class="t" style="left:700.4px;top:42.6px;font-size:6.21px;color:#d8d8d8;">Appearance</div>
<div class="ab" style="left:698px;top:52.4px;width:97.5px;height:14px;background:#2c2e32;"></div>
<div class="ab" style="left:699.5px;top:52.4px;width:66.5px;height:14px;background:#45474b;"></div>
<div class="ab" style="left:699.5px;top:52.4px;width:22.4px;height:14px;background:#2a2c30;"></div>
<div class="ab" style="left:699.5px;top:52.4px;width:22.4px;height:1.2px;background:#7a52c8;"></div>
<div class="t" style="left:701.5px;top:55.5px;font-size:7.18px;color:#e8e8e8;">Layers</div>
<div class="t" style="left:725px;top:55.5px;font-size:7.18px;color:#e8e8e8;">Objects</div>
<div class="t" style="left:751px;top:55.5px;font-size:7.18px;color:#e8e8e8;">Nets</div>
<div class="ab" style="left:699.5px;top:66.4px;width:94.5px;height:216.5px;background:#3f4145;"></div>
<div class="ab" style="left:699.5px;top:67px;width:94.5px;height:7.6px;background:#4c4e52;"></div>
<div class="ab" style="left:705.3px;top:67.39999999999999px;width:7.2px;height:6.4px;background:#d83c3c;"></div>
<svg width="9" height="8" style="left:714.6999999999999px;top:66.6px"><circle cx="3.5" cy="4" r="3.8" fill="#36383c"/><path d="M0.6 4q2.9-3.4 5.8 0q-2.9 3.4-5.8 0z" fill="#ece8ee"/><circle cx="3.5" cy="4" r="0.7" fill="#a8a4b0"/></svg>
<div class="t" style="left:723.7px;top:66.6px;font-size:6.97px;color:#e4e4e4;">F.Cu</div>
<div class="ab" style="left:705.3px;top:75.47999999999999px;width:7.2px;height:6.4px;background:#4d90d8;"></div>
<svg width="9" height="8" style="left:714.6999999999999px;top:74.67999999999999px"><circle cx="3.5" cy="4" r="3.8" fill="#36383c"/><path d="M0.6 4q2.9-3.4 5.8 0q-2.9 3.4-5.8 0z" fill="#ece8ee"/><circle cx="3.5" cy="4" r="0.7" fill="#a8a4b0"/></svg>
<div class="t" style="left:723.7px;top:74.67999999999999px;font-size:6.97px;color:#e4e4e4;">B.Cu</div>
<div class="ab" style="left:705.3px;top:83.55999999999999px;width:7.2px;height:6.4px;background:#8c1a9c;"></div>
<svg width="9" height="8" style="left:714.6999999999999px;top:82.75999999999999px"><circle cx="3.5" cy="4" r="3.8" fill="#36383c"/><path d="M0.6 4q2.9-3.4 5.8 0q-2.9 3.4-5.8 0z" fill="#ece8ee"/><circle cx="3.5" cy="4" r="0.7" fill="#a8a4b0"/></svg>
<div class="t" style="left:723.7px;top:82.75999999999999px;font-size:6.97px;color:#e4e4e4;">F.Adhesive</div>
<div class="ab" style="left:705.3px;top:91.64px;width:7.2px;height:6.4px;background:#10108a;"></div>
<svg width="9" height="8" style="left:714.6999999999999px;top:90.84px"><circle cx="3.5" cy="4" r="3.8" fill="#36383c"/><path d="M0.6 4q2.9-3.4 5.8 0q-2.9 3.4-5.8 0z" fill="#ece8ee"/><circle cx="3.5" cy="4" r="0.7" fill="#a8a4b0"/></svg>
<div class="t" style="left:723.7px;top:90.84px;font-size:6.97px;color:#e4e4e4;">B.Adhesive</div>
<div class="ab" style="left:705.3px;top:99.71999999999998px;width:7.2px;height:6.4px;background:#b4a098;"></div>
<svg width="9" height="8" style="left:714.6999999999999px;top:98.91999999999999px"><circle cx="3.5" cy="4" r="3.8" fill="#36383c"/><path d="M0.6 4q2.9-3.4 5.8 0q-2.9 3.4-5.8 0z" fill="#ece8ee"/><circle cx="3.5" cy="4" r="0.7" fill="#a8a4b0"/></svg>
<div class="t" style="left:723.7px;top:98.91999999999999px;font-size:6.97px;color:#e4e4e4;">F.Paste</div>
<div class="ab" style="left:705.3px;top:107.8px;width:7.2px;height:6.4px;background:#10b4b4;"></div>
<svg width="9" height="8" style="left:714.6999999999999px;top:107.0px"><circle cx="3.5" cy="4" r="3.8" fill="#36383c"/><path d="M0.6 4q2.9-3.4 5.8 0q-2.9 3.4-5.8 0z" fill="#ece8ee"/><circle cx="3.5" cy="4" r="0.7" fill="#a8a4b0"/></svg>
<div class="t" style="left:723.7px;top:107.0px;font-size:6.97px;color:#e4e4e4;">B.Paste</div>
<div class="ab" style="left:705.3px;top:115.88px;width:7.2px;height:6.4px;background:#f0f0a0;"></div>
<svg width="9" height="8" style="left:714.6999999999999px;top:115.08px"><circle cx="3.5" cy="4" r="3.8" fill="#36383c"/><path d="M0.6 4q2.9-3.4 5.8 0q-2.9 3.4-5.8 0z" fill="#ece8ee"/><circle cx="3.5" cy="4" r="0.7" fill="#a8a4b0"/></svg>
<div class="t" style="left:723.7px;top:115.08px;font-size:6.97px;color:#e4e4e4;">F.Silkscreen</div>
<div class="ab" style="left:705.3px;top:123.96px;width:7.2px;height:6.4px;background:#f0c0b0;"></div>
<svg width="9" height="8" style="left:714.6999999999999px;top:123.16px"><circle cx="3.5" cy="4" r="3.8" fill="#36383c"/><path d="M0.6 4q2.9-3.4 5.8 0q-2.9 3.4-5.8 0z" fill="#ece8ee"/><circle cx="3.5" cy="4" r="0.7" fill="#a8a4b0"/></svg>
<div class="t" style="left:723.7px;top:123.16px;font-size:6.97px;color:#e4e4e4;">B.Silkscreen</div>
<svg width="7.2" height="6.4" style="left:705.3px;top:132.04000000000002px"><rect width="7.2" height="6.4" fill="#6a3a80"/><path d="M0 0h1.8v1.6h-1.8zM3.6 0h1.8v1.6h-1.8zM1.8 1.6h1.8v1.6h-1.8zM5.4 1.6h1.8v1.6h-1.8zM0 3.2h1.8v1.6h-1.8zM3.6 3.2h1.8v1.6h-1.8zM1.8 4.8h1.8v1.6h-1.8zM5.4 4.8h1.8v1.6h-1.8z" fill="#2a1a3a"/></svg>
<svg width="9" height="8" style="left:714.6999999999999px;top:131.24px"><circle cx="3.5" cy="4" r="3.8" fill="#36383c"/><path d="M0.6 4q2.9-3.4 5.8 0q-2.9 3.4-5.8 0z" fill="#ece8ee"/><circle cx="3.5" cy="4" r="0.7" fill="#a8a4b0"/></svg>
<div class="t" style="left:723.7px;top:131.24px;font-size:6.97px;color:#e4e4e4;">F.Mask</div>
<svg width="7.2" height="6.4" style="left:705.3px;top:140.12px"><rect width="7.2" height="6.4" fill="#2a7a6a"/><path d="M0 0h1.8v1.6h-1.8zM3.6 0h1.8v1.6h-1.8zM1.8 1.6h1.8v1.6h-1.8zM5.4 1.6h1.8v1.6h-1.8zM0 3.2h1.8v1.6h-1.8zM3.6 3.2h1.8v1.6h-1.8zM1.8 4.8h1.8v1.6h-1.8zM5.4 4.8h1.8v1.6h-1.8z" fill="#103a30"/></svg>
<svg width="9" height="8" style="left:714.6999999999999px;top:139.32px"><circle cx="3.5" cy="4" r="3.8" fill="#36383c"/><path d="M0.6 4q2.9-3.4 5.8 0q-2.9 3.4-5.8 0z" fill="#ece8ee"/><circle cx="3.5" cy="4" r="0.7" fill="#a8a4b0"/></svg>
<div class="t" style="left:723.7px;top:139.32px;font-size:6.97px;color:#e4e4e4;">B.Mask</div>
<div class="ab" style="left:705.3px;top:148.2px;width:7.2px;height:6.4px;background:#c8c8c8;"></div>
<svg width="9" height="8" style="left:714.6999999999999px;top:147.39999999999998px"><circle cx="3.5" cy="4" r="3.8" fill="#36383c"/><path d="M0.6 4q2.9-3.4 5.8 0q-2.9 3.4-5.8 0z" fill="#ece8ee"/><circle cx="3.5" cy="4" r="0.7" fill="#a8a4b0"/></svg>
<div class="t" style="left:723.7px;top:147.39999999999998px;font-size:6.97px;color:#e4e4e4;">User.Drawings</div>
<div class="ab" style="left:705.3px;top:156.28px;width:7.2px;height:6.4px;background:#5a9ae6;"></div>
<svg width="9" height="8" style="left:714.6999999999999px;top:155.48px"><circle cx="3.5" cy="4" r="3.8" fill="#36383c"/><path d="M0.6 4q2.9-3.4 5.8 0q-2.9 3.4-5.8 0z" fill="#ece8ee"/><circle cx="3.5" cy="4" r="0.7" fill="#a8a4b0"/></svg>
<div class="t" style="left:723.7px;top:155.48px;font-size:6.97px;color:#e4e4e4;">User.Comments</div>
<div class="ab" style="left:705.3px;top:164.36px;width:7.2px;height:6.4px;background:#b4e6dc;"></div>
<svg width="9" height="8" style="left:714.6999999999999px;top:163.56px"><circle cx="3.5" cy="4" r="3.8" fill="#36383c"/><path d="M0.6 4q2.9-3.4 5.8 0q-2.9 3.4-5.8 0z" fill="#ece8ee"/><circle cx="3.5" cy="4" r="0.7" fill="#a8a4b0"/></svg>
<div class="t" style="left:723.7px;top:163.56px;font-size:6.97px;color:#e4e4e4;">User.Eco1</div>
<div class="ab" style="left:705.3px;top:172.44px;width:7.2px;height:6.4px;background:#e0d060;"></div>
<svg width="9" height="8" style="left:714.6999999999999px;top:171.64px"><circle cx="3.5" cy="4" r="3.8" fill="#36383c"/><path d="M0.6 4q2.9-3.4 5.8 0q-2.9 3.4-5.8 0z" fill="#ece8ee"/><circle cx="3.5" cy="4" r="0.7" fill="#a8a4b0"/></svg>
<div class="t" style="left:723.7px;top:171.64px;font-size:6.97px;color:#e4e4e4;">User.Eco2</div>
<div class="ab" style="left:705.3px;top:180.52px;width:7.2px;height:6.4px;background:#dcdcd4;"></div>
<svg width="9" height="8" style="left:714.6999999999999px;top:179.72px"><circle cx="3.5" cy="4" r="3.8" fill="#36383c"/><path d="M0.6 4q2.9-3.4 5.8 0q-2.9 3.4-5.8 0z" fill="#ece8ee"/><circle cx="3.5" cy="4" r="0.7" fill="#a8a4b0"/></svg>
<div class="t" style="left:723.7px;top:179.72px;font-size:6.97px;color:#e4e4e4;">Edge.Cuts</div>
<div class="ab" style="left:705.3px;top:188.60000000000002px;width:7.2px;height:6.4px;background:#ff26e2;"></div>
<svg width="9" height="8" style="left:714.6999999999999px;top:187.8px"><circle cx="3.5" cy="4" r="3.8" fill="#36383c"/><path d="M0.6 4q2.9-3.4 5.8 0q-2.9 3.4-5.8 0z" fill="#ece8ee"/><circle cx="3.5" cy="4" r="0.7" fill="#a8a4b0"/></svg>
<div class="t" style="left:723.7px;top:187.8px;font-size:6.97px;color:#e4e4e4;">Margin</div>
<div class="ab" style="left:705.3px;top:196.68px;width:7.2px;height:6.4px;background:#ff26e2;"></div>
<svg width="9" height="8" style="left:714.6999999999999px;top:195.88px"><circle cx="3.5" cy="4" r="3.8" fill="#36383c"/><path d="M0.6 4q2.9-3.4 5.8 0q-2.9 3.4-5.8 0z" fill="#ece8ee"/><circle cx="3.5" cy="4" r="0.7" fill="#a8a4b0"/></svg>
<div class="t" style="left:723.7px;top:195.88px;font-size:6.97px;color:#e4e4e4;">F.Courtyard</div>
<div class="ab" style="left:705.3px;top:204.76000000000002px;width:7.2px;height:6.4px;background:#26e8ff;"></div>
<svg width="9" height="8" style="left:714.6999999999999px;top:203.96px"><circle cx="3.5" cy="4" r="3.8" fill="#36383c"/><path d="M0.6 4q2.9-3.4 5.8 0q-2.9 3.4-5.8 0z" fill="#ece8ee"/><circle cx="3.5" cy="4" r="0.7" fill="#a8a4b0"/></svg>
<div class="t" style="left:723.7px;top:203.96px;font-size:6.97px;color:#e4e4e4;">B.Courtyard</div>
<div class="ab" style="left:705.3px;top:212.84px;width:7.2px;height:6.4px;background:#b0b0b0;"></div>
<svg width="9" height="8" style="left:714.6999999999999px;top:212.04px"><circle cx="3.5" cy="4" r="3.8" fill="#36383c"/><path d="M0.6 4q2.9-3.4 5.8 0q-2.9 3.4-5.8 0z" fill="#ece8ee"/><circle cx="3.5" cy="4" r="0.7" fill="#a8a4b0"/></svg>
<div class="t" style="left:723.7px;top:212.04px;font-size:6.97px;color:#e4e4e4;">F.Fab</div>
<div class="ab" style="left:705.3px;top:220.92000000000002px;width:7.2px;height:6.4px;background:#5c5c9c;"></div>
<svg width="9" height="8" style="left:714.6999999999999px;top:220.12px"><circle cx="3.5" cy="4" r="3.8" fill="#36383c"/><path d="M0.6 4q2.9-3.4 5.8 0q-2.9 3.4-5.8 0z" fill="#ece8ee"/><circle cx="3.5" cy="4" r="0.7" fill="#a8a4b0"/></svg>
<div class="t" style="left:723.7px;top:220.12px;font-size:6.97px;color:#e4e4e4;">B.Fab</div>
<svg width="5" height="6" style="left:701.5px;top:67.8px"><path d="M0.5 0.5l3 2.5-3 2.5z" fill="#4060f0"/></svg>
<div class="ab" style="left:699.5px;top:283px;width:94.5px;height:10.5px;background:#2e3034;border:0.6px solid #3a3c40"></div>
<svg width="5" height="6" style="left:703px;top:285.7px"><path d="M0.5 0.5l3 2.5-3 2.5z" fill="#b0b0b0"/></svg>
<div class="t" style="left:707.5px;top:284.6px;font-size:6.86px;color:#7a7c80;">Layer Display Options</div>
<div class="t" style="left:702px;top:298px;font-size:6.86px;color:#e0e0e0;">Presets (Ctrl+Tab):</div>
<div class="ab" style="left:702px;top:307px;width:90.8px;height:12.6px;background:#26282b;border:0.8px solid #3a3c40;border-radius:2.5px"></div>
<div class="t" style="left:705px;top:309.3px;font-size:6.53px;color:#c8c8c8;">—</div>
<svg width="8" height="5" style="left:783px;top:310.8px"><path d="M1 1l3 3 3-3" stroke="#d0d0d0" stroke-width="0.9" fill="none"/></svg>
<div class="t" style="left:702px;top:321.5px;font-size:6.86px;color:#e0e0e0;">Viewports (Shift+Tab):</div>
<div class="ab" style="left:702px;top:330.5px;width:90.8px;height:13.1px;background:#26282b;border:0.8px solid #3a3c40;border-radius:2.5px"></div>
<div class="t" style="left:705px;top:333px;font-size:6.53px;color:#c8c8c8;">—</div>
<svg width="8" height="5" style="left:783px;top:334.5px"><path d="M1 1l3 3 3-3" stroke="#d0d0d0" stroke-width="0.9" fill="none"/></svg>
<div class="ab" style="left:699.5px;top:347.6px;width:96px;height:8px;background:#26282b;"></div>
<div class="t" style="left:700.5px;top:347.5px;font-size:6.64px;color:#d8d8d8;">Selection Filter</div>
<svg width="7" height="7" style="left:703px;top:358.7px"><rect x="0" y="0" width="7" height="7" rx="1.5" fill="#2e2a40"/><path d="M1.3 3.6l1.7 1.7 3-3.6" stroke="#f0f0f0" stroke-width="1.1" fill="none"/></svg>
<div class="t" style="left:711px;top:358.2px;font-size:7.29px;color:#e0e0e0;">All items</div>
<div class="ab" style="left:746.5px;top:358.7px;width:7px;height:7px;background:transparent;border:0.8px solid #606266;border-radius:1.5px"></div>
<div class="t" style="left:755px;top:358.2px;font-size:7.29px;color:#e0e0e0;">Locked items</div>
<svg width="7" height="7" style="left:703px;top:367.55px"><rect x="0" y="0" width="7" height="7" rx="1.5" fill="#2e2a40"/><path d="M1.3 3.6l1.7 1.7 3-3.6" stroke="#f0f0f0" stroke-width="1.1" fill="none"/></svg>
<div class="t" style="left:711px;top:367.05px;font-size:7.29px;color:#e0e0e0;">Footprints</div>
<svg width="7" height="7" style="left:746.5px;top:367.55px"><rect x="0" y="0" width="7" height="7" rx="1.5" fill="#2e2a40"/><path d="M1.3 3.6l1.7 1.7 3-3.6" stroke="#f0f0f0" stroke-width="1.1" fill="none"/></svg>
<div class="t" style="left:755px;top:367.05px;font-size:7.29px;color:#e0e0e0;">Text</div>
<svg width="7" height="7" style="left:703px;top:376.4px"><rect x="0" y="0" width="7" height="7" rx="1.5" fill="#2e2a40"/><path d="M1.3 3.6l1.7 1.7 3-3.6" stroke="#f0f0f0" stroke-width="1.1" fill="none"/></svg>
<div class="t" style="left:711px;top:375.9px;font-size:7.29px;color:#e0e0e0;">Tracks</div>
<svg width="7" height="7" style="left:746.5px;top:376.4px"><rect x="0" y="0" width="7" height="7" rx="1.5" fill="#2e2a40"/><path d="M1.3 3.6l1.7 1.7 3-3.6" stroke="#f0f0f0" stroke-width="1.1" fill="none"/></svg>
<div class="t" style="left:755px;top:375.9px;font-size:7.29px;color:#e0e0e0;">Vias</div>
<svg width="7" height="7" style="left:703px;top:385.25px"><rect x="0" y="0" width="7" height="7" rx="1.5" fill="#2e2a40"/><path d="M1.3 3.6l1.7 1.7 3-3.6" stroke="#f0f0f0" stroke-width="1.1" fill="none"/></svg>
<div class="t" style="left:711px;top:384.75px;font-size:7.29px;color:#e0e0e0;">Pads</div>
<svg width="7" height="7" style="left:746.5px;top:385.25px"><rect x="0" y="0" width="7" height="7" rx="1.5" fill="#2e2a40"/><path d="M1.3 3.6l1.7 1.7 3-3.6" stroke="#f0f0f0" stroke-width="1.1" fill="none"/></svg>
<div class="t" style="left:755px;top:384.75px;font-size:7.29px;color:#e0e0e0;">Graphics</div>
<svg width="7" height="7" style="left:703px;top:394.09999999999997px"><rect x="0" y="0" width="7" height="7" rx="1.5" fill="#2e2a40"/><path d="M1.3 3.6l1.7 1.7 3-3.6" stroke="#f0f0f0" stroke-width="1.1" fill="none"/></svg>
<div class="t" style="left:711px;top:393.59999999999997px;font-size:7.29px;color:#e0e0e0;">Zones</div>
<svg width="7" height="7" style="left:746.5px;top:394.09999999999997px"><rect x="0" y="0" width="7" height="7" rx="1.5" fill="#2e2a40"/><path d="M1.3 3.6l1.7 1.7 3-3.6" stroke="#f0f0f0" stroke-width="1.1" fill="none"/></svg>
<div class="t" style="left:755px;top:393.59999999999997px;font-size:7.29px;color:#e0e0e0;">Rule Areas</div>
<svg width="7" height="7" style="left:703px;top:402.95px"><rect x="0" y="0" width="7" height="7" rx="1.5" fill="#2e2a40"/><path d="M1.3 3.6l1.7 1.7 3-3.6" stroke="#f0f0f0" stroke-width="1.1" fill="none"/></svg>
<div class="t" style="left:711px;top:402.45px;font-size:7.29px;color:#e0e0e0;">Dimensions</div>
<svg width="7" height="7" style="left:746.5px;top:402.95px"><rect x="0" y="0" width="7" height="7" rx="1.5" fill="#2e2a40"/><path d="M1.3 3.6l1.7 1.7 3-3.6" stroke="#f0f0f0" stroke-width="1.1" fill="none"/></svg>
<div class="t" style="left:755px;top:402.45px;font-size:7.29px;color:#e0e0e0;">Other items</div>
<svg width="800" height="440" style="left:0;top:0"><rect x="403.1" y="44.3" width="13.4" height="13.4" rx="1" fill="#3a2c5a" stroke="#4a3a78" stroke-width="0.5"/><rect x="404.8" y="46.0" width="1.8" height="1.8" fill="none" stroke="#dcdcdc" stroke-width="0.6"/><rect x="404.8" y="48.7" width="1.8" height="1.8" fill="none" stroke="#dcdcdc" stroke-width="0.6"/><rect x="404.8" y="51.4" width="1.8" height="1.8" fill="none" stroke="#dcdcdc" stroke-width="0.6"/><rect x="404.8" y="54.1" width="1.8" height="1.8" fill="none" stroke="#dcdcdc" stroke-width="0.6"/><rect x="407.5" y="46.0" width="1.8" height="1.8" fill="none" stroke="#dcdcdc" stroke-width="0.6"/><rect x="407.5" y="48.7" width="1.8" height="1.8" fill="none" stroke="#dcdcdc" stroke-width="0.6"/><rect x="407.5" y="51.4" width="1.8" height="1.8" fill="none" stroke="#dcdcdc" stroke-width="0.6"/><rect x="407.5" y="54.1" width="1.8" height="1.8" fill="none" stroke="#dcdcdc" stroke-width="0.6"/><rect x="410.2" y="46.0" width="1.8" height="1.8" fill="none" stroke="#dcdcdc" stroke-width="0.6"/><rect x="410.2" y="48.7" width="1.8" height="1.8" fill="none" stroke="#dcdcdc" stroke-width="0.6"/><rect x="410.2" y="51.4" width="1.8" height="1.8" fill="none" stroke="#dcdcdc" stroke-width="0.6"/><rect x="410.2" y="54.1" width="1.8" height="1.8" fill="none" stroke="#dcdcdc" stroke-width="0.6"/><rect x="412.90000000000003" y="46.0" width="1.8" height="1.8" fill="none" stroke="#dcdcdc" stroke-width="0.6"/><rect x="412.90000000000003" y="48.7" width="1.8" height="1.8" fill="none" stroke="#dcdcdc" stroke-width="0.6"/><rect x="412.90000000000003" y="51.4" width="1.8" height="1.8" fill="none" stroke="#dcdcdc" stroke-width="0.6"/><rect x="412.90000000000003" y="54.1" width="1.8" height="1.8" fill="none" stroke="#dcdcdc" stroke-width="0.6"/><rect x="403.1" y="58.8" width="13.4" height="13.4" rx="1" fill="#3a2c5a" stroke="#4a3a78" stroke-width="0.5"/><path d="M404.8 71l10-10v10z" fill="#8a8a8a"/><path d="M404.8 71l10-10" stroke="#dcdcdc" stroke-width="0.8"/><rect x="405.3" y="60.5" width="1.2" height="1.2" fill="#dcdcdc"/><rect x="405.3" y="63.9" width="1.2" height="1.2" fill="#dcdcdc"/><rect x="405.3" y="67.3" width="1.2" height="1.2" fill="#dcdcdc"/><rect x="408.7" y="60.5" width="1.2" height="1.2" fill="#dcdcdc"/><rect x="408.7" y="63.9" width="1.2" height="1.2" fill="#dcdcdc"/><rect x="412.1" y="60.5" width="1.2" height="1.2" fill="#dcdcdc"/><path d="M405.3 74v10h10" stroke="#dcdcdc" stroke-width="0.8" fill="none"/><path d="M405.3 84l8-8" stroke="#dcdcdc" stroke-width="0.8"/><circle cx="413.8" cy="75" r="1.2" fill="#e84a5a"/><path d="M408.8 84a4 4 0 0 0 -1-4" stroke="#dcdcdc" stroke-width="0.5" fill="none"/><text x="409.8" y="91.5" font-size="5" fill="#dcdcdc" font-family="Liberation Sans" text-anchor="middle">in</text><path d="M404.8 94.5h10" stroke="#dcdcdc" stroke-width="1"/><text x="409.8" y="105.5" font-size="5" fill="#dcdcdc" font-family="Liberation Sans" text-anchor="middle">mil</text><path d="M404.8 108.5h10" stroke="#dcdcdc" stroke-width="1"/><rect x="403.1" y="112.3" width="13.4" height="13.4" rx="1" fill="#3a2c5a" stroke="#4a3a78" stroke-width="0.5"/><text x="409.8" y="118.5" font-size="4.6" fill="#dcdcdc" font-family="Liberation Sans" text-anchor="middle">mm</text><path d="M404.8 121.5h10" stroke="#dcdcdc" stroke-width="1"/><path d="M409.8 127v11M404.8 132h10" stroke="#6a7a8a" stroke-width="0.5"/><path d="M408.8 130l4.5 7 0.8-2.5 2.5 2" fill="#dcdcdc"/><circle cx="409.3" cy="131.5" r="2" fill="#3aa8e0"/><rect x="403.8" y="141" width="12" height="0.6" fill="#3c3e43"/><path d="M404.8 145v11h11M404.8 156l9-9" stroke="#dcdcdc" stroke-width="0.9" fill="none"/><rect x="403.8" y="158" width="12" height="0.6" fill="#3c3e43"/><rect x="403.1" y="160.3" width="13.4" height="13.4" rx="1" fill="#3a2c5a" stroke="#4a3a78" stroke-width="0.5"/><path d="M405.8 163l8 8M413.8 163l-8 8" stroke="#dcdcdc" stroke-width="0.9"/><circle cx="405.8" cy="163" r="1.1" fill="#dcdcdc"/><circle cx="413.8" cy="163" r="1.1" fill="#dcdcdc"/><circle cx="405.8" cy="171" r="1.1" fill="#dcdcdc"/><circle cx="413.8" cy="171" r="1.1" fill="#dcdcdc"/><path d="M404.8 185l10-10" stroke="#dcdcdc" stroke-width="0.8"/><path d="M406.8 185a6 6 0 0 1 8-8M404.8 183a6 6 0 0 1 8-8" stroke="#dcdcdc" stroke-width="0.6" fill="none"/><path d="M404.8 194q5 2 10 6M404.8 198q5 2 10 6" stroke="#e05060" stroke-width="0.9" fill="none"/><path d="M404.8 196q5 2 10 6" stroke="#dcdcdc" stroke-width="0.7" fill="none"/><circle cx="408.8" cy="197" r="1.6" fill="#f0a020"/><path d="M405.8 215v-6a3 3 0 0 1 6 0v6M409.8 215v-5a3 3 0 0 1 6 0" stroke="#a0a0a0" stroke-width="0.8" fill="none"/><path d="M407.8 210h8" stroke="#3aa8e0" stroke-width="0.8"/><circle cx="406.8" cy="212" r="1.2" fill="#f0a020"/><rect x="403.8" y="218" width="12" height="0.6" fill="#3c3e43"/><rect x="403.1" y="222.3" width="13.4" height="13.4" rx="1" fill="#3a2c5a" stroke="#4a3a78" stroke-width="0.5"/><path d="M404.8 234v-9h4v3h6v6z" fill="#3aa8e0"/><rect x="410.8" y="228" width="3" height="2" fill="#f0f0f0"/><rect x="405.3" y="239" width="9" height="10" fill="none" stroke="#3aa8e0" stroke-width="0.8" stroke-dasharray="1.3 1"/><rect x="410.3" y="242.5" width="3.5" height="2.5" fill="#e8e8e8"/><circle cx="405.8" cy="255" r="1.2" fill="#3aa8e0"/><circle cx="405.8" cy="264" r="1.2" fill="none" stroke="#3aa8e0" stroke-width="0.6"/><circle cx="408.8" cy="255" r="1.2" fill="#3aa8e0"/><circle cx="408.8" cy="264" r="1.2" fill="none" stroke="#3aa8e0" stroke-width="0.6"/><circle cx="411.8" cy="255" r="1.2" fill="#3aa8e0"/><circle cx="411.8" cy="264" r="1.2" fill="none" stroke="#3aa8e0" stroke-width="0.6"/><circle cx="414.8" cy="255" r="1.2" fill="#3aa8e0"/><circle cx="414.8" cy="264" r="1.2" fill="none" stroke="#3aa8e0" stroke-width="0.6"/><path d="M404.8 263l10-7" stroke="#dcdcdc" stroke-width="0.7"/><circle cx="409.8" cy="273" r="4.5" fill="#f0a020"/><circle cx="409.8" cy="273" r="1.6" fill="#2a2c30"/><path d="M403.8 279l12-11" stroke="#dcdcdc" stroke-width="0.7"/><path d="M404.8 286.5h10" stroke="#3aa8e0" stroke-width="1.2"/><path d="M409.8 281.5v10" stroke="#e05060" stroke-width="1.2"/><path d="M403.8 292l12-11" stroke="#dcdcdc" stroke-width="0.7"/><rect x="403.8" y="295" width="12" height="0.6" fill="#3c3e43"/><rect x="403.1" y="296.90000000000003" width="13.4" height="13.4" rx="1" fill="#3a2c5a" stroke="#4a3a78" stroke-width="0.5"/><path d="M409.8 298.5l5 3v3.5l-5 3-5-3v-3.5z" fill="#3aa8e0"/><path d="M404.8 305l5 3 5-3v2l-5 3.5-5-3.5z" fill="#f0902a"/><path d="M405.3 321l9-9M405.3 312l9 9" stroke="#dcdcdc" stroke-width="1.3"/><path d="M411.8 312l3 3" stroke="#3aa8e0" stroke-width="1.6"/><path d="M405.3 321l3-3" stroke="#3aa8e0" stroke-width="1.6"/><rect x="683.5999999999999" y="44.3" width="13.4" height="13.4" rx="1" fill="#3a2c5a" stroke="#4a3a78" stroke-width="0.5"/><path d="M687.8 46.5v8.5l2-2 1.5 3 1.2-0.6-1.5-3h2.8z" fill="#dcdcdc"/><path d="M685.3 61l10 10M695.3 61l-10 10" stroke="#dcdcdc" stroke-width="0.8"/><circle cx="690.3" cy="66" r="0.9" fill="#dcdcdc"/><rect x="684.3" y="74" width="12" height="0.6" fill="#3c3e43"/><circle cx="686.3" cy="78.5" r="1.2" fill="#3aa8e0"/><circle cx="686.3" cy="87" r="1.2" fill="#3aa8e0"/><circle cx="689.0" cy="78.5" r="1.2" fill="#3aa8e0"/><circle cx="689.0" cy="87" r="1.2" fill="#3aa8e0"/><circle cx="691.6999999999999" cy="78.5" r="1.2" fill="#3aa8e0"/><circle cx="691.6999999999999" cy="87" r="1.2" fill="#3aa8e0"/><circle cx="694.4" cy="78.5" r="1.2" fill="#3aa8e0"/><circle cx="694.4" cy="87" r="1.2" fill="#3aa8e0"/><path d="M685.8 79v8M694.8 79v8" stroke="#dcdcdc" stroke-width="0.6"/><path d="M685.3 101q1-5 4-5t3-4 3-2" stroke="#3aa8e0" stroke-width="1" fill="none"/><path d="M693.3 102h3v-3z" fill="#dcdcdc"/><path d="M685.3 111q1-4 2.5-1t2.5 1 2.5-1 2.5 1" stroke="#3aa8e0" stroke-width="0.9" fill="none"/><path d="M685.3 113q1-4 2.5-1t2.5 1 2.5-1 2.5 1" stroke="#3aa8e0" stroke-width="0.9" fill="none"/><path d="M693.3 116h3v-3z" fill="#dcdcdc"/><circle cx="689.8" cy="124" r="3.2" fill="#f0902a"/><circle cx="689.8" cy="124" r="1.1" fill="#f8f0e0"/><path d="M685.3 141v-5h3v-3h6v8z" fill="#3aa8e0"/><circle cx="692.3" cy="136" r="1.2" fill="#e8e8e8"/><path d="M685.3 155l3-9h7v9z" fill="#c8c8c8"/><path d="M686.3 154l8-8M689.3 155l6-6M686.3 151l5-5" stroke="#2a2c30" stroke-width="0.8"/><rect x="684.3" y="159" width="12" height="0.6" fill="#3c3e43"/><path d="M685.3 172l10-9" stroke="#dcdcdc" stroke-width="1"/><path d="M685.3 186a9 9 0 0 1 9-9" stroke="#dcdcdc" stroke-width="1" fill="none"/><rect x="685.8" y="189.5" width="9" height="9" fill="#6a6c70" stroke="#dcdcdc" stroke-width="0.9"/><circle cx="690.3" cy="208" r="4.6" fill="#6a6c70" stroke="#dcdcdc" stroke-width="0.9"/><path d="M685.3 218l10 2-2 7-3-3-3 3z" fill="#6a6c70" stroke="#dcdcdc" stroke-width="0.8"/><path d="M685.3 238q0-6 5-3t5-4" stroke="#dcdcdc" stroke-width="0.9" fill="none"/><path d="M684.3 235h12" stroke="#3aa8e0" stroke-width="0.9" stroke-dasharray="1.2 0.8"/><rect x="685.3" y="243.5" width="10" height="10" rx="1.2" fill="#e8e8e8"/><path d="M686.8 252l2.5-3.5 2 2 1.5-1.5 1.5 3z" fill="#505050"/><circle cx="692.3" cy="246.5" r="1.2" fill="#505050"/><text x="690.3" y="267" font-size="11" font-weight="bold" fill="#dcdcdc" font-family="Liberation Sans" text-anchor="middle">T</text><rect x="685.8" y="271" width="9" height="9" fill="#8a8c90" stroke="#dcdcdc" stroke-width="0.9"/><rect x="685.3" y="284" width="10" height="10" fill="none" stroke="#dcdcdc" stroke-width="0.8"/><path d="M685.3 287.3h10M685.3 290.6h10M688.5999999999999 284v10M691.9 284v10" stroke="#dcdcdc" stroke-width="0.6"/><path d="M686.3 298.5h7v8" stroke="#dcdcdc" stroke-width="0.8" fill="none"/><circle cx="686.3" cy="298.5" r="1.2" fill="#3aa8e0"/><circle cx="693.3" cy="306.5" r="1.2" fill="#3aa8e0"/><path d="M693.3 308.5h3v-3z" fill="#dcdcdc"/><path d="M685.3 311v9l2-2 1.5 3 1.2-0.6-1.5-3h2.8z" fill="#b0b0b0"/><circle cx="692.8" cy="318.5" r="3" fill="#e84a5a"/><path d="M691.5999999999999 317.3l2.4 2.4M694.0 317.3l-2.4 2.4" stroke="#fff" stroke-width="0.6"/><rect x="684.3" y="324" width="12" height="0.6" fill="#3c3e43"/><rect x="685.8" y="328.5" width="1" height="1" fill="#dcdcdc"/><rect x="685.8" y="331.5" width="1" height="1" fill="#dcdcdc"/><rect x="685.8" y="334.5" width="1" height="1" fill="#dcdcdc"/><rect x="685.8" y="337.5" width="1" height="1" fill="#dcdcdc"/><rect x="688.8" y="328.5" width="1" height="1" fill="#dcdcdc"/><rect x="688.8" y="331.5" width="1" height="1" fill="#dcdcdc"/><rect x="688.8" y="334.5" width="1" height="1" fill="#dcdcdc"/><rect x="688.8" y="337.5" width="1" height="1" fill="#dcdcdc"/><rect x="691.8" y="328.5" width="1" height="1" fill="#dcdcdc"/><rect x="691.8" y="331.5" width="1" height="1" fill="#dcdcdc"/><rect x="691.8" y="334.5" width="1" height="1" fill="#dcdcdc"/><rect x="691.8" y="337.5" width="1" height="1" fill="#dcdcdc"/><rect x="694.8" y="328.5" width="1" height="1" fill="#dcdcdc"/><rect x="694.8" y="331.5" width="1" height="1" fill="#dcdcdc"/><rect x="694.8" y="334.5" width="1" height="1" fill="#dcdcdc"/><rect x="694.8" y="337.5" width="1" height="1" fill="#dcdcdc"/><path d="M690.3 328v10M685.3 333h10" stroke="#3aa8e0" stroke-width="1"/><path d="M693.3 339h3v-3z" fill="#dcdcdc"/><path d="M686.3 352l8-8" stroke="#dcdcdc" stroke-width="4"/><path d="M686.3 352l8-8" stroke="#2a2c30" stroke-width="2.4"/></svg>
<div class="ab" style="left:795.5px;top:0px;width:5px;height:440px;background:linear-gradient(180deg,#3a2a18 0%,#1e1e14 25%,#2a3a1c 60%,#3a4a2a 85%,#8a90a0 92%,#a8b0c0 100%);"></div>
<svg width="800" height="440" style="left:0;top:0"><defs><linearGradient id="bg1" x1="0" y1="0" x2="0" y2="1"><stop offset="0" stop-color="#28a8c0"/><stop offset="0.5" stop-color="#2ab0b0"/><stop offset="1" stop-color="#30c080"/></linearGradient></defs><rect x="401.5" y="1.5" width="394" height="437.5" rx="5.5" fill="none" stroke="url(#bg1)" stroke-width="1.1"/></svg>
</body></html>
